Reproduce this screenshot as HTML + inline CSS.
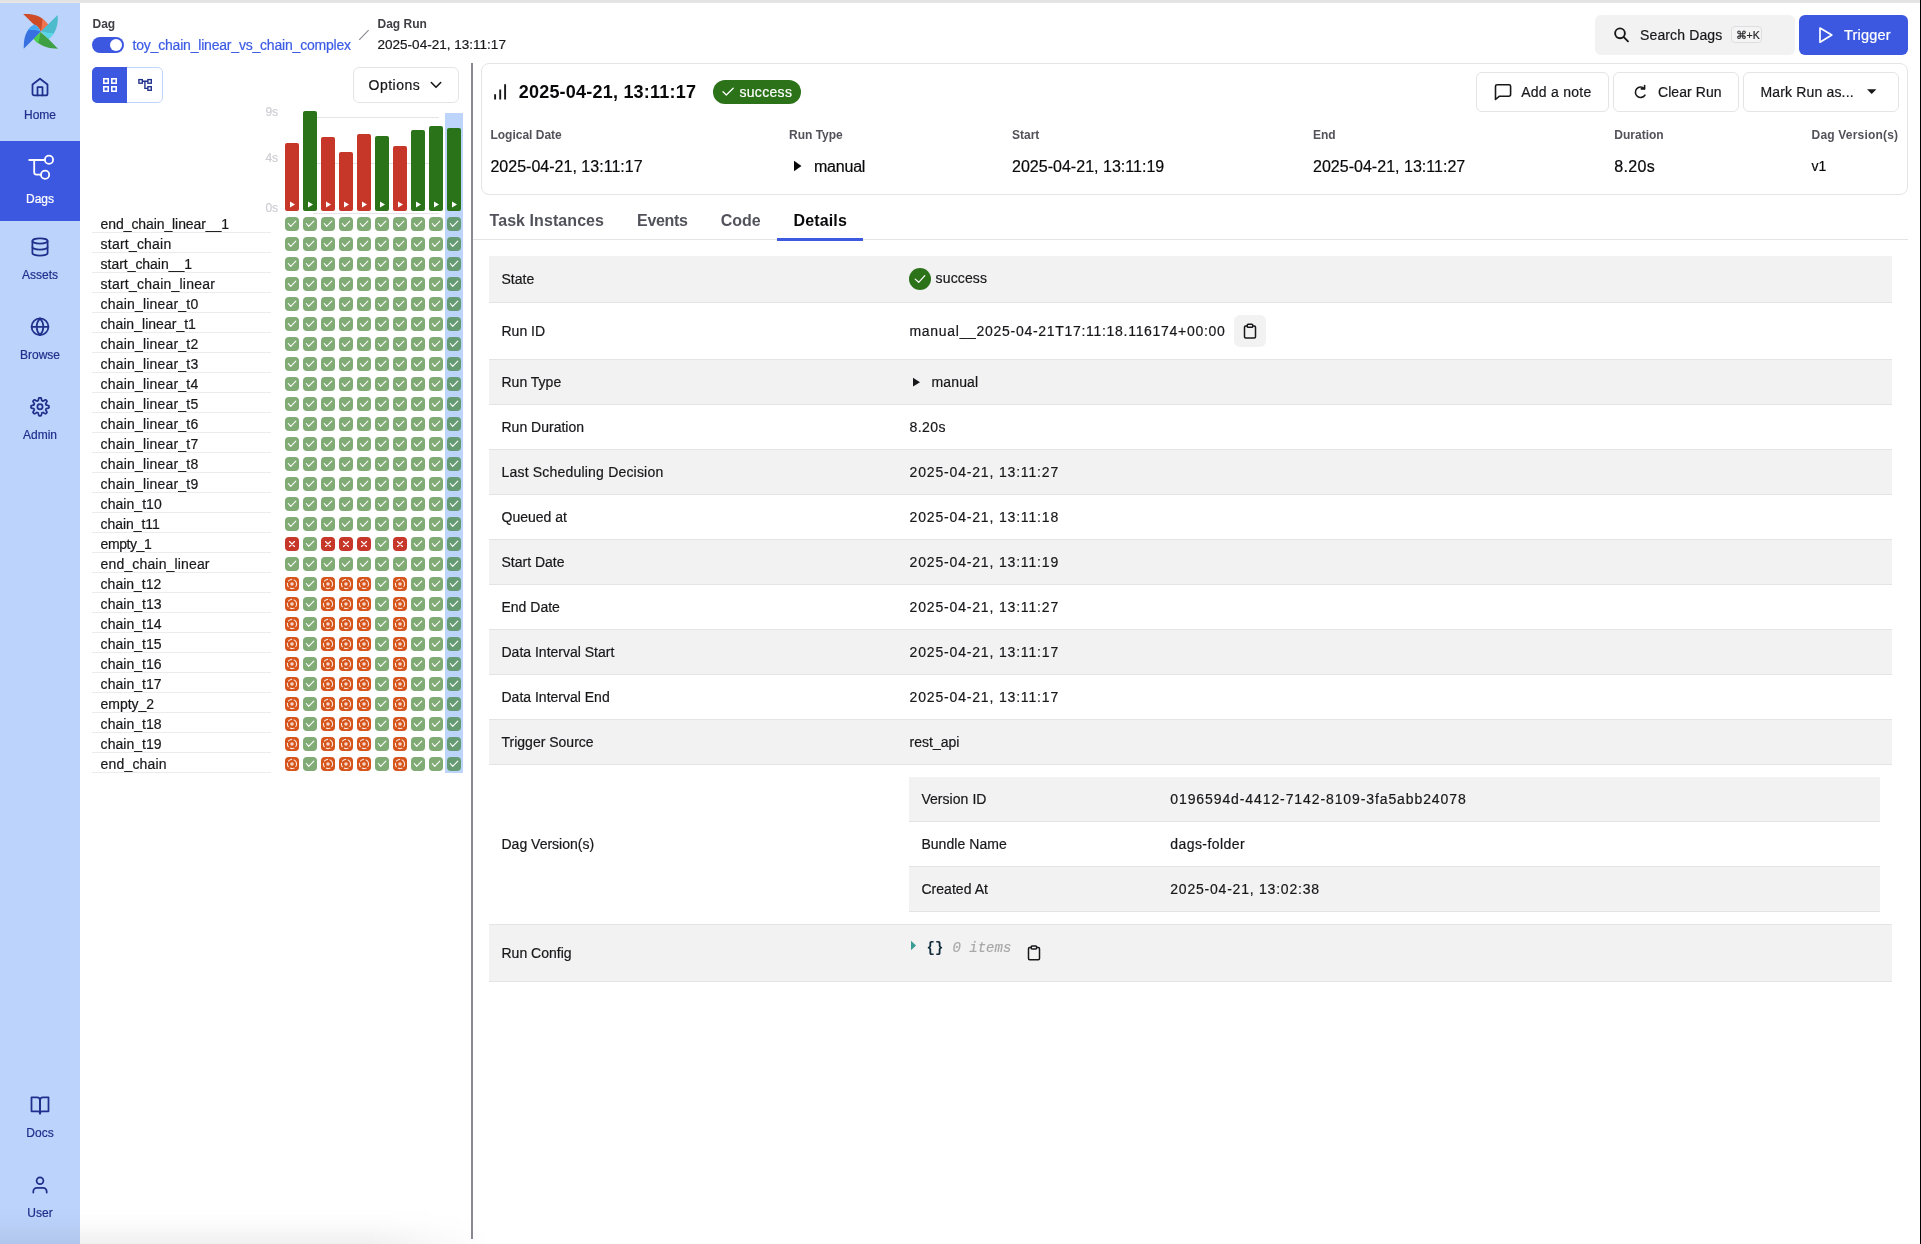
<!DOCTYPE html>
<html><head><meta charset="utf-8"><style>
*{box-sizing:border-box;margin:0;padding:0}
html,body{width:1921px;height:1244px;overflow:hidden;background:#fff;font-family:"Liberation Sans",sans-serif;color:#18181b}
.a{position:absolute}
.t{position:absolute;white-space:nowrap;line-height:1;-webkit-text-stroke:0.2px currentColor}
.b{-webkit-text-stroke:0}
svg{position:absolute;overflow:visible}
</style></head><body>
<div style="position:absolute;left:0;top:0;width:1921px;height:1244px;will-change:transform">
<div class="a" style="left:0px;top:0px;width:1920px;height:2px;background:#e3e3e3;"></div>
<div class="a" style="left:0px;top:2px;width:1920px;height:1px;background:rgba(0,0,0,0.09);"></div>
<div class="a" style="left:1920px;top:0px;width:1px;height:1244px;background:#000;"></div>
<div class="a" style="left:0px;top:3px;width:80px;height:1241px;background:#bcd3fb;"></div>
<div class="a" style="left:0px;top:141px;width:80px;height:80px;background:#3d58e0;"></div>
<div class="t" style="left:0;width:80px;text-align:center;top:108.74px;font-size:12px;color:#1f2f8c">Home</div>
<div class="t" style="left:0;width:80px;text-align:center;top:192.84px;font-size:12px;color:#fff">Dags</div>
<div class="t" style="left:0;width:80px;text-align:center;top:268.74px;font-size:12px;color:#1f2f8c">Assets</div>
<div class="t" style="left:0;width:80px;text-align:center;top:348.74px;font-size:12px;color:#1f2f8c">Browse</div>
<div class="t" style="left:0;width:80px;text-align:center;top:428.74px;font-size:12px;color:#1f2f8c">Admin</div>
<div class="t" style="left:0;width:80px;text-align:center;top:1126.74px;font-size:12px;color:#1f2f8c">Docs</div>
<div class="t" style="left:0;width:80px;text-align:center;top:1206.74px;font-size:12px;color:#1f2f8c">User</div>
<svg style="left:0;top:0" width="80" height="1244" viewBox="0 0 80 1244" fill="none" stroke-linecap="round" stroke-linejoin="round">
<g stroke="#1f2f8c" stroke-width="1.75">
 <!-- home -->
 <path d="M32.5 84.5 L40 78.7 L47.5 84.5 V93.7 a1.7 1.7 0 0 1 -1.7 1.7 H34.2 a1.7 1.7 0 0 1 -1.7 -1.7 Z"/>
 <path d="M37.5 95.4 V87.1 H42.5 V95.4"/>
 <!-- assets: database -->
 <ellipse cx="40" cy="241" rx="7.6" ry="2.6"/>
 <path d="M47.6 247 c0 1.45 -3.4 2.6 -7.6 2.6 s-7.6 -1.15 -7.6 -2.6"/>
 <path d="M32.4 241 v12 c0 1.45 3.4 2.6 7.6 2.6 s7.6 -1.15 7.6 -2.6 v-12"/>
 <!-- browse: globe -->
 <circle cx="40" cy="326.8" r="8.4"/>
 <line x1="31.6" y1="326.8" x2="48.4" y2="326.8"/>
 <path d="M40 318.4 a12.8 12.8 0 0 1 3.4 8.4 a12.8 12.8 0 0 1 -3.4 8.4 a12.8 12.8 0 0 1 -3.4 -8.4 a12.8 12.8 0 0 1 3.4 -8.4 z"/>
 <!-- admin gear -->
 <circle cx="40" cy="406.8" r="2.6"/>
 <path d="M40.00 397.80 L40.35 397.81 L40.71 397.83 L41.05 397.94 L41.31 398.56 L41.50 399.25 L41.65 399.94 L41.76 400.57 L41.98 400.71 L42.22 400.80 L42.45 400.89 L42.68 400.99 L42.91 401.10 L43.16 401.15 L43.69 400.78 L44.28 400.40 L44.90 400.05 L45.52 399.79 L45.85 399.96 L46.11 400.19 L46.36 400.44 L46.61 400.69 L46.84 400.95 L47.01 401.28 L46.75 401.90 L46.40 402.52 L46.02 403.11 L45.65 403.64 L45.70 403.89 L45.81 404.12 L45.91 404.35 L46.00 404.58 L46.09 404.82 L46.23 405.04 L46.86 405.15 L47.55 405.30 L48.24 405.49 L48.86 405.75 L48.97 406.09 L48.99 406.45 L49.00 406.80 L48.99 407.15 L48.97 407.51 L48.86 407.85 L48.24 408.11 L47.55 408.30 L46.86 408.45 L46.23 408.56 L46.09 408.78 L46.00 409.02 L45.91 409.25 L45.81 409.48 L45.70 409.71 L45.65 409.96 L46.02 410.49 L46.40 411.08 L46.75 411.70 L47.01 412.32 L46.84 412.65 L46.61 412.91 L46.36 413.16 L46.11 413.41 L45.85 413.64 L45.52 413.81 L44.90 413.55 L44.28 413.20 L43.69 412.82 L43.16 412.45 L42.91 412.50 L42.68 412.61 L42.45 412.71 L42.22 412.80 L41.98 412.89 L41.76 413.03 L41.65 413.66 L41.50 414.35 L41.31 415.04 L41.05 415.66 L40.71 415.77 L40.35 415.79 L40.00 415.80 L39.65 415.79 L39.29 415.77 L38.95 415.66 L38.69 415.04 L38.50 414.35 L38.35 413.66 L38.24 413.03 L38.02 412.89 L37.78 412.80 L37.55 412.71 L37.32 412.61 L37.09 412.50 L36.84 412.45 L36.31 412.82 L35.72 413.20 L35.10 413.55 L34.48 413.81 L34.15 413.64 L33.89 413.41 L33.64 413.16 L33.39 412.91 L33.16 412.65 L32.99 412.32 L33.25 411.70 L33.60 411.08 L33.98 410.49 L34.35 409.96 L34.30 409.71 L34.19 409.48 L34.09 409.25 L34.00 409.02 L33.91 408.78 L33.77 408.56 L33.14 408.45 L32.45 408.30 L31.76 408.11 L31.14 407.85 L31.03 407.51 L31.01 407.15 L31.00 406.80 L31.01 406.45 L31.03 406.09 L31.14 405.75 L31.76 405.49 L32.45 405.30 L33.14 405.15 L33.77 405.04 L33.91 404.82 L34.00 404.58 L34.09 404.35 L34.19 404.12 L34.30 403.89 L34.35 403.64 L33.98 403.11 L33.60 402.52 L33.25 401.90 L32.99 401.28 L33.16 400.95 L33.39 400.69 L33.64 400.44 L33.89 400.19 L34.15 399.96 L34.48 399.79 L35.10 400.05 L35.72 400.40 L36.31 400.78 L36.84 401.15 L37.09 401.10 L37.32 400.99 L37.55 400.89 L37.78 400.80 L38.02 400.71 L38.24 400.57 L38.35 399.94 L38.50 399.25 L38.69 398.56 L38.95 397.94 L39.29 397.83 L39.65 397.81 L40.00 397.80 Z"/>
 <!-- docs: book -->
 <path d="M31.5 1097.3 H37 a3 3 0 0 1 3 3 V1113.5 a2.2 2.2 0 0 0 -2.2 -2.2 H31.5 Z"/>
 <path d="M48.5 1097.3 H43 a3 3 0 0 0 -3 3 V1113.5 a2.2 2.2 0 0 1 2.2 -2.2 H48.5 Z"/>
 <!-- user -->
 <circle cx="40" cy="1180.8" r="3.4"/>
 <path d="M33.3 1192.6 v-1.2 a3.6 3.6 0 0 1 3.6 -3.6 h6.2 a3.6 3.6 0 0 1 3.6 3.6 v1.2"/>
</g>
<g stroke="#fff" stroke-width="1.8">
 <path d="M29.2 160 H44.9"/>
 <circle cx="49" cy="159.8" r="4.1"/>
 <path d="M34.2 160 V172.3 a2.4 2.4 0 0 0 2.4 2.4 H40.9"/>
 <circle cx="45.1" cy="174.8" r="4.1"/>
</g>
</svg>
<svg style="left:20px;top:10px" width="42" height="42" viewBox="0 0 1244 1244">
<path fill="#cf4a26" d="M95 120 C330 110 560 150 700 290 L830 430 L615 640 C560 520 500 440 410 430 Z"/>
<path fill="#ee7452" d="M660 250 C740 320 800 380 830 430 L615 640 C640 520 660 380 660 250 Z"/>
<path fill="#4cbccd" d="M1115 145 C1130 400 1100 650 850 850 L625 640 L830 430 Z"/>
<path fill="#59d7e9" d="M625 640 C700 640 800 690 1000 690 C950 760 900 810 850 850 C760 760 700 700 625 640 Z"/>
<path fill="#3fa043" d="M1125 1145 C870 1140 620 1100 400 850 L610 650 L850 870 Z"/>
<path fill="#4fd053" d="M610 650 C600 750 560 900 540 990 C480 950 440 900 400 850 Z"/>
<path fill="#3670e1" d="M110 1150 C110 850 150 600 420 440 L610 640 L400 860 Z"/>
<path fill="#46a8f6" d="M420 440 C470 440 560 520 610 640 C500 590 380 580 230 600 C290 520 350 470 420 440 Z"/>
</svg>
<div class="t" style="left:92.50px;top:17.74px;font-size:12px;font-weight:700;-webkit-text-stroke:0;color:#3f3f46;">Dag</div>
<div class="a" style="left:92px;top:37px;width:32px;height:16px;background:#3d58e0;border-radius:8px"></div>
<div class="a" style="left:110px;top:39px;width:12px;height:12px;background:#fff;border-radius:6px"></div>
<div class="t" style="left:132.50px;top:38.15px;font-size:14px;color:#3b5be4;letter-spacing:-0.198px">toy_chain_linear_vs_chain_complex</div>
<svg style="left:0;top:0" width="1" height="1"><line x1="359.2" y1="39.8" x2="368.6" y2="30.1" stroke="#85858e" stroke-width="1.05"/></svg>
<div class="t" style="left:377.50px;top:17.64px;font-size:12px;font-weight:700;-webkit-text-stroke:0;color:#3f3f46;">Dag Run</div>
<div class="t" style="left:377.50px;top:38.37px;font-size:13.5px;color:#18181b;letter-spacing:0.015px">2025-04-21, 13:11:17</div>
<div class="a" style="left:92px;top:67px;width:71px;height:36px;background:#fff;border:1px solid #c0d5fb;border-radius:5px"></div>
<div class="a" style="left:92px;top:67px;width:35px;height:36px;background:#3d58e0;border-radius:5px 0 0 5px"></div>
<svg style="left:0;top:0" width="1" height="1" fill="none" stroke-width="1.6">
<g stroke="#fff"><rect x="103.8" y="78.8" width="4.4" height="4.4"/><rect x="111.8" y="78.8" width="4.4" height="4.4"/><rect x="103.8" y="86.8" width="4.4" height="4.4"/><rect x="111.8" y="86.8" width="4.4" height="4.4"/></g>
<g stroke="#1f2f8c" stroke-width="1.35"><rect x="138.9" y="79.6" width="3.4" height="3.6"/><rect x="147.9" y="79.6" width="3.4" height="3.6"/><rect x="147.9" y="86.7" width="3.4" height="3.6"/><path d="M142.3 81.2 H147.9 M144.9 81.2 V88.4 H147.9"/></g>
</svg>
<div class="a" style="left:353px;top:67px;width:106px;height:36px;background:#fff;border:1px solid #e4e4e7;border-radius:6px"></div>
<div class="t" style="left:368.60px;top:78.25px;font-size:14px;color:#18181b;letter-spacing:0.475px">Options</div>
<svg style="left:0;top:0" width="1" height="1" fill="none"><path d="M431.3 82.5 L436 87.3 L440.7 82.5" stroke="#18181b" stroke-width="1.6" stroke-linecap="round" stroke-linejoin="round"/></svg>
<div class="a" style="left:471px;top:63px;width:2px;height:1176px;background:#8a8a93;"></div>
<div class="t" style="left:265.40px;top:105.74px;font-size:12px;color:#cdcdd3;">9s</div>
<div class="t" style="left:265.40px;top:151.64px;font-size:12px;color:#cdcdd3;">4s</div>
<div class="t" style="left:265.40px;top:201.84px;font-size:12px;color:#cdcdd3;">0s</div>
<div class="a" style="left:313px;top:117px;width:126px;height:1px;background:#e4e4e7;"></div>
<div class="a" style="left:313px;top:163px;width:126px;height:1px;background:#e4e4e7;"></div>
<div class="a" style="left:313px;top:213px;width:126px;height:1px;background:#e4e4e7;"></div>
<div class="a" style="left:445px;top:113px;width:18px;height:660px;background:#bdd5fb;"></div>
<div class="a" style="left:285px;top:143px;width:14px;height:68px;background:#c6372a;border-radius:2px"></div>
<div class="a" style="left:303px;top:111px;width:14px;height:100px;background:#2b7319;border-radius:2px"></div>
<div class="a" style="left:321px;top:137px;width:14px;height:74px;background:#c6372a;border-radius:2px"></div>
<div class="a" style="left:339px;top:152px;width:14px;height:59px;background:#c6372a;border-radius:2px"></div>
<div class="a" style="left:357px;top:134px;width:14px;height:77px;background:#c6372a;border-radius:2px"></div>
<div class="a" style="left:375px;top:136px;width:14px;height:75px;background:#2b7319;border-radius:2px"></div>
<div class="a" style="left:393px;top:146px;width:14px;height:65px;background:#c6372a;border-radius:2px"></div>
<div class="a" style="left:411px;top:130px;width:14px;height:81px;background:#2b7319;border-radius:2px"></div>
<div class="a" style="left:429px;top:126px;width:14px;height:85px;background:#2b7319;border-radius:2px"></div>
<div class="a" style="left:447px;top:128px;width:14px;height:83px;background:#2b7319;border-radius:2px"></div>
<svg style="left:0;top:0" width="1" height="1"><path d="M290 201.5 L295 204.5 L290 207.5 Z" fill="#fff"/><path d="M308 201.5 L313 204.5 L308 207.5 Z" fill="#fff"/><path d="M326 201.5 L331 204.5 L326 207.5 Z" fill="#fff"/><path d="M344 201.5 L349 204.5 L344 207.5 Z" fill="#fff"/><path d="M362 201.5 L367 204.5 L362 207.5 Z" fill="#fff"/><path d="M380 201.5 L385 204.5 L380 207.5 Z" fill="#fff"/><path d="M398 201.5 L403 204.5 L398 207.5 Z" fill="#fff"/><path d="M416 201.5 L421 204.5 L416 207.5 Z" fill="#fff"/><path d="M434 201.5 L439 204.5 L434 207.5 Z" fill="#fff"/><path d="M452 201.5 L457 204.5 L452 207.5 Z" fill="#fff"/></svg>
<div class="t" style="left:100.60px;top:217.05px;font-size:14px;color:#18181b;letter-spacing:-0.089px">end_chain_linear__1</div>
<div class="a" style="left:92px;top:232px;width:179px;height:1px;background:#ececee;"></div>
<div class="a" style="left:285px;top:217px;width:14px;height:14px;background:rgba(43,115,25,0.6);border-radius:4px"></div>
<div class="a" style="left:303px;top:217px;width:14px;height:14px;background:rgba(43,115,25,0.6);border-radius:4px"></div>
<div class="a" style="left:321px;top:217px;width:14px;height:14px;background:rgba(43,115,25,0.6);border-radius:4px"></div>
<div class="a" style="left:339px;top:217px;width:14px;height:14px;background:rgba(43,115,25,0.6);border-radius:4px"></div>
<div class="a" style="left:357px;top:217px;width:14px;height:14px;background:rgba(43,115,25,0.6);border-radius:4px"></div>
<div class="a" style="left:375px;top:217px;width:14px;height:14px;background:rgba(43,115,25,0.6);border-radius:4px"></div>
<div class="a" style="left:393px;top:217px;width:14px;height:14px;background:rgba(43,115,25,0.6);border-radius:4px"></div>
<div class="a" style="left:411px;top:217px;width:14px;height:14px;background:rgba(43,115,25,0.6);border-radius:4px"></div>
<div class="a" style="left:429px;top:217px;width:14px;height:14px;background:rgba(43,115,25,0.6);border-radius:4px"></div>
<div class="a" style="left:447px;top:217px;width:14px;height:14px;background:rgba(43,115,25,0.6);border-radius:4px"></div>
<div class="t" style="left:100.60px;top:237.05px;font-size:14px;color:#18181b;letter-spacing:0.212px">start_chain</div>
<div class="a" style="left:92px;top:252px;width:179px;height:1px;background:#ececee;"></div>
<div class="a" style="left:285px;top:237px;width:14px;height:14px;background:rgba(43,115,25,0.6);border-radius:4px"></div>
<div class="a" style="left:303px;top:237px;width:14px;height:14px;background:rgba(43,115,25,0.6);border-radius:4px"></div>
<div class="a" style="left:321px;top:237px;width:14px;height:14px;background:rgba(43,115,25,0.6);border-radius:4px"></div>
<div class="a" style="left:339px;top:237px;width:14px;height:14px;background:rgba(43,115,25,0.6);border-radius:4px"></div>
<div class="a" style="left:357px;top:237px;width:14px;height:14px;background:rgba(43,115,25,0.6);border-radius:4px"></div>
<div class="a" style="left:375px;top:237px;width:14px;height:14px;background:rgba(43,115,25,0.6);border-radius:4px"></div>
<div class="a" style="left:393px;top:237px;width:14px;height:14px;background:rgba(43,115,25,0.6);border-radius:4px"></div>
<div class="a" style="left:411px;top:237px;width:14px;height:14px;background:rgba(43,115,25,0.6);border-radius:4px"></div>
<div class="a" style="left:429px;top:237px;width:14px;height:14px;background:rgba(43,115,25,0.6);border-radius:4px"></div>
<div class="a" style="left:447px;top:237px;width:14px;height:14px;background:rgba(43,115,25,0.6);border-radius:4px"></div>
<div class="t" style="left:100.60px;top:257.05px;font-size:14px;color:#18181b;letter-spacing:-0.034px">start_chain__1</div>
<div class="a" style="left:92px;top:272px;width:179px;height:1px;background:#ececee;"></div>
<div class="a" style="left:285px;top:257px;width:14px;height:14px;background:rgba(43,115,25,0.6);border-radius:4px"></div>
<div class="a" style="left:303px;top:257px;width:14px;height:14px;background:rgba(43,115,25,0.6);border-radius:4px"></div>
<div class="a" style="left:321px;top:257px;width:14px;height:14px;background:rgba(43,115,25,0.6);border-radius:4px"></div>
<div class="a" style="left:339px;top:257px;width:14px;height:14px;background:rgba(43,115,25,0.6);border-radius:4px"></div>
<div class="a" style="left:357px;top:257px;width:14px;height:14px;background:rgba(43,115,25,0.6);border-radius:4px"></div>
<div class="a" style="left:375px;top:257px;width:14px;height:14px;background:rgba(43,115,25,0.6);border-radius:4px"></div>
<div class="a" style="left:393px;top:257px;width:14px;height:14px;background:rgba(43,115,25,0.6);border-radius:4px"></div>
<div class="a" style="left:411px;top:257px;width:14px;height:14px;background:rgba(43,115,25,0.6);border-radius:4px"></div>
<div class="a" style="left:429px;top:257px;width:14px;height:14px;background:rgba(43,115,25,0.6);border-radius:4px"></div>
<div class="a" style="left:447px;top:257px;width:14px;height:14px;background:rgba(43,115,25,0.6);border-radius:4px"></div>
<div class="t" style="left:100.60px;top:277.05px;font-size:14px;color:#18181b;letter-spacing:0.223px">start_chain_linear</div>
<div class="a" style="left:92px;top:292px;width:179px;height:1px;background:#ececee;"></div>
<div class="a" style="left:285px;top:277px;width:14px;height:14px;background:rgba(43,115,25,0.6);border-radius:4px"></div>
<div class="a" style="left:303px;top:277px;width:14px;height:14px;background:rgba(43,115,25,0.6);border-radius:4px"></div>
<div class="a" style="left:321px;top:277px;width:14px;height:14px;background:rgba(43,115,25,0.6);border-radius:4px"></div>
<div class="a" style="left:339px;top:277px;width:14px;height:14px;background:rgba(43,115,25,0.6);border-radius:4px"></div>
<div class="a" style="left:357px;top:277px;width:14px;height:14px;background:rgba(43,115,25,0.6);border-radius:4px"></div>
<div class="a" style="left:375px;top:277px;width:14px;height:14px;background:rgba(43,115,25,0.6);border-radius:4px"></div>
<div class="a" style="left:393px;top:277px;width:14px;height:14px;background:rgba(43,115,25,0.6);border-radius:4px"></div>
<div class="a" style="left:411px;top:277px;width:14px;height:14px;background:rgba(43,115,25,0.6);border-radius:4px"></div>
<div class="a" style="left:429px;top:277px;width:14px;height:14px;background:rgba(43,115,25,0.6);border-radius:4px"></div>
<div class="a" style="left:447px;top:277px;width:14px;height:14px;background:rgba(43,115,25,0.6);border-radius:4px"></div>
<div class="t" style="left:100.60px;top:297.05px;font-size:14px;color:#18181b;letter-spacing:0.188px">chain_linear_t0</div>
<div class="a" style="left:92px;top:312px;width:179px;height:1px;background:#ececee;"></div>
<div class="a" style="left:285px;top:297px;width:14px;height:14px;background:rgba(43,115,25,0.6);border-radius:4px"></div>
<div class="a" style="left:303px;top:297px;width:14px;height:14px;background:rgba(43,115,25,0.6);border-radius:4px"></div>
<div class="a" style="left:321px;top:297px;width:14px;height:14px;background:rgba(43,115,25,0.6);border-radius:4px"></div>
<div class="a" style="left:339px;top:297px;width:14px;height:14px;background:rgba(43,115,25,0.6);border-radius:4px"></div>
<div class="a" style="left:357px;top:297px;width:14px;height:14px;background:rgba(43,115,25,0.6);border-radius:4px"></div>
<div class="a" style="left:375px;top:297px;width:14px;height:14px;background:rgba(43,115,25,0.6);border-radius:4px"></div>
<div class="a" style="left:393px;top:297px;width:14px;height:14px;background:rgba(43,115,25,0.6);border-radius:4px"></div>
<div class="a" style="left:411px;top:297px;width:14px;height:14px;background:rgba(43,115,25,0.6);border-radius:4px"></div>
<div class="a" style="left:429px;top:297px;width:14px;height:14px;background:rgba(43,115,25,0.6);border-radius:4px"></div>
<div class="a" style="left:447px;top:297px;width:14px;height:14px;background:rgba(43,115,25,0.6);border-radius:4px"></div>
<div class="t" style="left:100.60px;top:317.05px;font-size:14px;color:#18181b;letter-spacing:0.024px">chain_linear_t1</div>
<div class="a" style="left:92px;top:332px;width:179px;height:1px;background:#ececee;"></div>
<div class="a" style="left:285px;top:317px;width:14px;height:14px;background:rgba(43,115,25,0.6);border-radius:4px"></div>
<div class="a" style="left:303px;top:317px;width:14px;height:14px;background:rgba(43,115,25,0.6);border-radius:4px"></div>
<div class="a" style="left:321px;top:317px;width:14px;height:14px;background:rgba(43,115,25,0.6);border-radius:4px"></div>
<div class="a" style="left:339px;top:317px;width:14px;height:14px;background:rgba(43,115,25,0.6);border-radius:4px"></div>
<div class="a" style="left:357px;top:317px;width:14px;height:14px;background:rgba(43,115,25,0.6);border-radius:4px"></div>
<div class="a" style="left:375px;top:317px;width:14px;height:14px;background:rgba(43,115,25,0.6);border-radius:4px"></div>
<div class="a" style="left:393px;top:317px;width:14px;height:14px;background:rgba(43,115,25,0.6);border-radius:4px"></div>
<div class="a" style="left:411px;top:317px;width:14px;height:14px;background:rgba(43,115,25,0.6);border-radius:4px"></div>
<div class="a" style="left:429px;top:317px;width:14px;height:14px;background:rgba(43,115,25,0.6);border-radius:4px"></div>
<div class="a" style="left:447px;top:317px;width:14px;height:14px;background:rgba(43,115,25,0.6);border-radius:4px"></div>
<div class="t" style="left:100.60px;top:337.05px;font-size:14px;color:#18181b;letter-spacing:0.188px">chain_linear_t2</div>
<div class="a" style="left:92px;top:352px;width:179px;height:1px;background:#ececee;"></div>
<div class="a" style="left:285px;top:337px;width:14px;height:14px;background:rgba(43,115,25,0.6);border-radius:4px"></div>
<div class="a" style="left:303px;top:337px;width:14px;height:14px;background:rgba(43,115,25,0.6);border-radius:4px"></div>
<div class="a" style="left:321px;top:337px;width:14px;height:14px;background:rgba(43,115,25,0.6);border-radius:4px"></div>
<div class="a" style="left:339px;top:337px;width:14px;height:14px;background:rgba(43,115,25,0.6);border-radius:4px"></div>
<div class="a" style="left:357px;top:337px;width:14px;height:14px;background:rgba(43,115,25,0.6);border-radius:4px"></div>
<div class="a" style="left:375px;top:337px;width:14px;height:14px;background:rgba(43,115,25,0.6);border-radius:4px"></div>
<div class="a" style="left:393px;top:337px;width:14px;height:14px;background:rgba(43,115,25,0.6);border-radius:4px"></div>
<div class="a" style="left:411px;top:337px;width:14px;height:14px;background:rgba(43,115,25,0.6);border-radius:4px"></div>
<div class="a" style="left:429px;top:337px;width:14px;height:14px;background:rgba(43,115,25,0.6);border-radius:4px"></div>
<div class="a" style="left:447px;top:337px;width:14px;height:14px;background:rgba(43,115,25,0.6);border-radius:4px"></div>
<div class="t" style="left:100.60px;top:357.05px;font-size:14px;color:#18181b;letter-spacing:0.188px">chain_linear_t3</div>
<div class="a" style="left:92px;top:372px;width:179px;height:1px;background:#ececee;"></div>
<div class="a" style="left:285px;top:357px;width:14px;height:14px;background:rgba(43,115,25,0.6);border-radius:4px"></div>
<div class="a" style="left:303px;top:357px;width:14px;height:14px;background:rgba(43,115,25,0.6);border-radius:4px"></div>
<div class="a" style="left:321px;top:357px;width:14px;height:14px;background:rgba(43,115,25,0.6);border-radius:4px"></div>
<div class="a" style="left:339px;top:357px;width:14px;height:14px;background:rgba(43,115,25,0.6);border-radius:4px"></div>
<div class="a" style="left:357px;top:357px;width:14px;height:14px;background:rgba(43,115,25,0.6);border-radius:4px"></div>
<div class="a" style="left:375px;top:357px;width:14px;height:14px;background:rgba(43,115,25,0.6);border-radius:4px"></div>
<div class="a" style="left:393px;top:357px;width:14px;height:14px;background:rgba(43,115,25,0.6);border-radius:4px"></div>
<div class="a" style="left:411px;top:357px;width:14px;height:14px;background:rgba(43,115,25,0.6);border-radius:4px"></div>
<div class="a" style="left:429px;top:357px;width:14px;height:14px;background:rgba(43,115,25,0.6);border-radius:4px"></div>
<div class="a" style="left:447px;top:357px;width:14px;height:14px;background:rgba(43,115,25,0.6);border-radius:4px"></div>
<div class="t" style="left:100.60px;top:377.05px;font-size:14px;color:#18181b;letter-spacing:0.188px">chain_linear_t4</div>
<div class="a" style="left:92px;top:392px;width:179px;height:1px;background:#ececee;"></div>
<div class="a" style="left:285px;top:377px;width:14px;height:14px;background:rgba(43,115,25,0.6);border-radius:4px"></div>
<div class="a" style="left:303px;top:377px;width:14px;height:14px;background:rgba(43,115,25,0.6);border-radius:4px"></div>
<div class="a" style="left:321px;top:377px;width:14px;height:14px;background:rgba(43,115,25,0.6);border-radius:4px"></div>
<div class="a" style="left:339px;top:377px;width:14px;height:14px;background:rgba(43,115,25,0.6);border-radius:4px"></div>
<div class="a" style="left:357px;top:377px;width:14px;height:14px;background:rgba(43,115,25,0.6);border-radius:4px"></div>
<div class="a" style="left:375px;top:377px;width:14px;height:14px;background:rgba(43,115,25,0.6);border-radius:4px"></div>
<div class="a" style="left:393px;top:377px;width:14px;height:14px;background:rgba(43,115,25,0.6);border-radius:4px"></div>
<div class="a" style="left:411px;top:377px;width:14px;height:14px;background:rgba(43,115,25,0.6);border-radius:4px"></div>
<div class="a" style="left:429px;top:377px;width:14px;height:14px;background:rgba(43,115,25,0.6);border-radius:4px"></div>
<div class="a" style="left:447px;top:377px;width:14px;height:14px;background:rgba(43,115,25,0.6);border-radius:4px"></div>
<div class="t" style="left:100.60px;top:397.05px;font-size:14px;color:#18181b;letter-spacing:0.188px">chain_linear_t5</div>
<div class="a" style="left:92px;top:412px;width:179px;height:1px;background:#ececee;"></div>
<div class="a" style="left:285px;top:397px;width:14px;height:14px;background:rgba(43,115,25,0.6);border-radius:4px"></div>
<div class="a" style="left:303px;top:397px;width:14px;height:14px;background:rgba(43,115,25,0.6);border-radius:4px"></div>
<div class="a" style="left:321px;top:397px;width:14px;height:14px;background:rgba(43,115,25,0.6);border-radius:4px"></div>
<div class="a" style="left:339px;top:397px;width:14px;height:14px;background:rgba(43,115,25,0.6);border-radius:4px"></div>
<div class="a" style="left:357px;top:397px;width:14px;height:14px;background:rgba(43,115,25,0.6);border-radius:4px"></div>
<div class="a" style="left:375px;top:397px;width:14px;height:14px;background:rgba(43,115,25,0.6);border-radius:4px"></div>
<div class="a" style="left:393px;top:397px;width:14px;height:14px;background:rgba(43,115,25,0.6);border-radius:4px"></div>
<div class="a" style="left:411px;top:397px;width:14px;height:14px;background:rgba(43,115,25,0.6);border-radius:4px"></div>
<div class="a" style="left:429px;top:397px;width:14px;height:14px;background:rgba(43,115,25,0.6);border-radius:4px"></div>
<div class="a" style="left:447px;top:397px;width:14px;height:14px;background:rgba(43,115,25,0.6);border-radius:4px"></div>
<div class="t" style="left:100.60px;top:417.05px;font-size:14px;color:#18181b;letter-spacing:0.188px">chain_linear_t6</div>
<div class="a" style="left:92px;top:432px;width:179px;height:1px;background:#ececee;"></div>
<div class="a" style="left:285px;top:417px;width:14px;height:14px;background:rgba(43,115,25,0.6);border-radius:4px"></div>
<div class="a" style="left:303px;top:417px;width:14px;height:14px;background:rgba(43,115,25,0.6);border-radius:4px"></div>
<div class="a" style="left:321px;top:417px;width:14px;height:14px;background:rgba(43,115,25,0.6);border-radius:4px"></div>
<div class="a" style="left:339px;top:417px;width:14px;height:14px;background:rgba(43,115,25,0.6);border-radius:4px"></div>
<div class="a" style="left:357px;top:417px;width:14px;height:14px;background:rgba(43,115,25,0.6);border-radius:4px"></div>
<div class="a" style="left:375px;top:417px;width:14px;height:14px;background:rgba(43,115,25,0.6);border-radius:4px"></div>
<div class="a" style="left:393px;top:417px;width:14px;height:14px;background:rgba(43,115,25,0.6);border-radius:4px"></div>
<div class="a" style="left:411px;top:417px;width:14px;height:14px;background:rgba(43,115,25,0.6);border-radius:4px"></div>
<div class="a" style="left:429px;top:417px;width:14px;height:14px;background:rgba(43,115,25,0.6);border-radius:4px"></div>
<div class="a" style="left:447px;top:417px;width:14px;height:14px;background:rgba(43,115,25,0.6);border-radius:4px"></div>
<div class="t" style="left:100.60px;top:437.05px;font-size:14px;color:#18181b;letter-spacing:0.188px">chain_linear_t7</div>
<div class="a" style="left:92px;top:452px;width:179px;height:1px;background:#ececee;"></div>
<div class="a" style="left:285px;top:437px;width:14px;height:14px;background:rgba(43,115,25,0.6);border-radius:4px"></div>
<div class="a" style="left:303px;top:437px;width:14px;height:14px;background:rgba(43,115,25,0.6);border-radius:4px"></div>
<div class="a" style="left:321px;top:437px;width:14px;height:14px;background:rgba(43,115,25,0.6);border-radius:4px"></div>
<div class="a" style="left:339px;top:437px;width:14px;height:14px;background:rgba(43,115,25,0.6);border-radius:4px"></div>
<div class="a" style="left:357px;top:437px;width:14px;height:14px;background:rgba(43,115,25,0.6);border-radius:4px"></div>
<div class="a" style="left:375px;top:437px;width:14px;height:14px;background:rgba(43,115,25,0.6);border-radius:4px"></div>
<div class="a" style="left:393px;top:437px;width:14px;height:14px;background:rgba(43,115,25,0.6);border-radius:4px"></div>
<div class="a" style="left:411px;top:437px;width:14px;height:14px;background:rgba(43,115,25,0.6);border-radius:4px"></div>
<div class="a" style="left:429px;top:437px;width:14px;height:14px;background:rgba(43,115,25,0.6);border-radius:4px"></div>
<div class="a" style="left:447px;top:437px;width:14px;height:14px;background:rgba(43,115,25,0.6);border-radius:4px"></div>
<div class="t" style="left:100.60px;top:457.05px;font-size:14px;color:#18181b;letter-spacing:0.188px">chain_linear_t8</div>
<div class="a" style="left:92px;top:472px;width:179px;height:1px;background:#ececee;"></div>
<div class="a" style="left:285px;top:457px;width:14px;height:14px;background:rgba(43,115,25,0.6);border-radius:4px"></div>
<div class="a" style="left:303px;top:457px;width:14px;height:14px;background:rgba(43,115,25,0.6);border-radius:4px"></div>
<div class="a" style="left:321px;top:457px;width:14px;height:14px;background:rgba(43,115,25,0.6);border-radius:4px"></div>
<div class="a" style="left:339px;top:457px;width:14px;height:14px;background:rgba(43,115,25,0.6);border-radius:4px"></div>
<div class="a" style="left:357px;top:457px;width:14px;height:14px;background:rgba(43,115,25,0.6);border-radius:4px"></div>
<div class="a" style="left:375px;top:457px;width:14px;height:14px;background:rgba(43,115,25,0.6);border-radius:4px"></div>
<div class="a" style="left:393px;top:457px;width:14px;height:14px;background:rgba(43,115,25,0.6);border-radius:4px"></div>
<div class="a" style="left:411px;top:457px;width:14px;height:14px;background:rgba(43,115,25,0.6);border-radius:4px"></div>
<div class="a" style="left:429px;top:457px;width:14px;height:14px;background:rgba(43,115,25,0.6);border-radius:4px"></div>
<div class="a" style="left:447px;top:457px;width:14px;height:14px;background:rgba(43,115,25,0.6);border-radius:4px"></div>
<div class="t" style="left:100.60px;top:477.05px;font-size:14px;color:#18181b;letter-spacing:0.188px">chain_linear_t9</div>
<div class="a" style="left:92px;top:492px;width:179px;height:1px;background:#ececee;"></div>
<div class="a" style="left:285px;top:477px;width:14px;height:14px;background:rgba(43,115,25,0.6);border-radius:4px"></div>
<div class="a" style="left:303px;top:477px;width:14px;height:14px;background:rgba(43,115,25,0.6);border-radius:4px"></div>
<div class="a" style="left:321px;top:477px;width:14px;height:14px;background:rgba(43,115,25,0.6);border-radius:4px"></div>
<div class="a" style="left:339px;top:477px;width:14px;height:14px;background:rgba(43,115,25,0.6);border-radius:4px"></div>
<div class="a" style="left:357px;top:477px;width:14px;height:14px;background:rgba(43,115,25,0.6);border-radius:4px"></div>
<div class="a" style="left:375px;top:477px;width:14px;height:14px;background:rgba(43,115,25,0.6);border-radius:4px"></div>
<div class="a" style="left:393px;top:477px;width:14px;height:14px;background:rgba(43,115,25,0.6);border-radius:4px"></div>
<div class="a" style="left:411px;top:477px;width:14px;height:14px;background:rgba(43,115,25,0.6);border-radius:4px"></div>
<div class="a" style="left:429px;top:477px;width:14px;height:14px;background:rgba(43,115,25,0.6);border-radius:4px"></div>
<div class="a" style="left:447px;top:477px;width:14px;height:14px;background:rgba(43,115,25,0.6);border-radius:4px"></div>
<div class="t" style="left:100.60px;top:497.05px;font-size:14px;color:#18181b;letter-spacing:0.048px">chain_t10</div>
<div class="a" style="left:92px;top:512px;width:179px;height:1px;background:#ececee;"></div>
<div class="a" style="left:285px;top:497px;width:14px;height:14px;background:rgba(43,115,25,0.6);border-radius:4px"></div>
<div class="a" style="left:303px;top:497px;width:14px;height:14px;background:rgba(43,115,25,0.6);border-radius:4px"></div>
<div class="a" style="left:321px;top:497px;width:14px;height:14px;background:rgba(43,115,25,0.6);border-radius:4px"></div>
<div class="a" style="left:339px;top:497px;width:14px;height:14px;background:rgba(43,115,25,0.6);border-radius:4px"></div>
<div class="a" style="left:357px;top:497px;width:14px;height:14px;background:rgba(43,115,25,0.6);border-radius:4px"></div>
<div class="a" style="left:375px;top:497px;width:14px;height:14px;background:rgba(43,115,25,0.6);border-radius:4px"></div>
<div class="a" style="left:393px;top:497px;width:14px;height:14px;background:rgba(43,115,25,0.6);border-radius:4px"></div>
<div class="a" style="left:411px;top:497px;width:14px;height:14px;background:rgba(43,115,25,0.6);border-radius:4px"></div>
<div class="a" style="left:429px;top:497px;width:14px;height:14px;background:rgba(43,115,25,0.6);border-radius:4px"></div>
<div class="a" style="left:447px;top:497px;width:14px;height:14px;background:rgba(43,115,25,0.6);border-radius:4px"></div>
<div class="t" style="left:100.60px;top:517.05px;font-size:14px;color:#18181b;letter-spacing:-0.073px">chain_t11</div>
<div class="a" style="left:92px;top:532px;width:179px;height:1px;background:#ececee;"></div>
<div class="a" style="left:285px;top:517px;width:14px;height:14px;background:rgba(43,115,25,0.6);border-radius:4px"></div>
<div class="a" style="left:303px;top:517px;width:14px;height:14px;background:rgba(43,115,25,0.6);border-radius:4px"></div>
<div class="a" style="left:321px;top:517px;width:14px;height:14px;background:rgba(43,115,25,0.6);border-radius:4px"></div>
<div class="a" style="left:339px;top:517px;width:14px;height:14px;background:rgba(43,115,25,0.6);border-radius:4px"></div>
<div class="a" style="left:357px;top:517px;width:14px;height:14px;background:rgba(43,115,25,0.6);border-radius:4px"></div>
<div class="a" style="left:375px;top:517px;width:14px;height:14px;background:rgba(43,115,25,0.6);border-radius:4px"></div>
<div class="a" style="left:393px;top:517px;width:14px;height:14px;background:rgba(43,115,25,0.6);border-radius:4px"></div>
<div class="a" style="left:411px;top:517px;width:14px;height:14px;background:rgba(43,115,25,0.6);border-radius:4px"></div>
<div class="a" style="left:429px;top:517px;width:14px;height:14px;background:rgba(43,115,25,0.6);border-radius:4px"></div>
<div class="a" style="left:447px;top:517px;width:14px;height:14px;background:rgba(43,115,25,0.6);border-radius:4px"></div>
<div class="t" style="left:100.60px;top:537.05px;font-size:14px;color:#18181b;letter-spacing:-0.434px">empty_1</div>
<div class="a" style="left:92px;top:552px;width:179px;height:1px;background:#ececee;"></div>
<div class="a" style="left:285px;top:537px;width:14px;height:14px;background:#c6372a;border-radius:4px"></div>
<div class="a" style="left:303px;top:537px;width:14px;height:14px;background:rgba(43,115,25,0.6);border-radius:4px"></div>
<div class="a" style="left:321px;top:537px;width:14px;height:14px;background:#c6372a;border-radius:4px"></div>
<div class="a" style="left:339px;top:537px;width:14px;height:14px;background:#c6372a;border-radius:4px"></div>
<div class="a" style="left:357px;top:537px;width:14px;height:14px;background:#c6372a;border-radius:4px"></div>
<div class="a" style="left:375px;top:537px;width:14px;height:14px;background:rgba(43,115,25,0.6);border-radius:4px"></div>
<div class="a" style="left:393px;top:537px;width:14px;height:14px;background:#c6372a;border-radius:4px"></div>
<div class="a" style="left:411px;top:537px;width:14px;height:14px;background:rgba(43,115,25,0.6);border-radius:4px"></div>
<div class="a" style="left:429px;top:537px;width:14px;height:14px;background:rgba(43,115,25,0.6);border-radius:4px"></div>
<div class="a" style="left:447px;top:537px;width:14px;height:14px;background:rgba(43,115,25,0.6);border-radius:4px"></div>
<div class="t" style="left:100.60px;top:557.05px;font-size:14px;color:#18181b;letter-spacing:0.151px">end_chain_linear</div>
<div class="a" style="left:92px;top:572px;width:179px;height:1px;background:#ececee;"></div>
<div class="a" style="left:285px;top:557px;width:14px;height:14px;background:rgba(43,115,25,0.6);border-radius:4px"></div>
<div class="a" style="left:303px;top:557px;width:14px;height:14px;background:rgba(43,115,25,0.6);border-radius:4px"></div>
<div class="a" style="left:321px;top:557px;width:14px;height:14px;background:rgba(43,115,25,0.6);border-radius:4px"></div>
<div class="a" style="left:339px;top:557px;width:14px;height:14px;background:rgba(43,115,25,0.6);border-radius:4px"></div>
<div class="a" style="left:357px;top:557px;width:14px;height:14px;background:rgba(43,115,25,0.6);border-radius:4px"></div>
<div class="a" style="left:375px;top:557px;width:14px;height:14px;background:rgba(43,115,25,0.6);border-radius:4px"></div>
<div class="a" style="left:393px;top:557px;width:14px;height:14px;background:rgba(43,115,25,0.6);border-radius:4px"></div>
<div class="a" style="left:411px;top:557px;width:14px;height:14px;background:rgba(43,115,25,0.6);border-radius:4px"></div>
<div class="a" style="left:429px;top:557px;width:14px;height:14px;background:rgba(43,115,25,0.6);border-radius:4px"></div>
<div class="a" style="left:447px;top:557px;width:14px;height:14px;background:rgba(43,115,25,0.6);border-radius:4px"></div>
<div class="t" style="left:100.60px;top:577.05px;font-size:14px;color:#18181b;letter-spacing:-0.002px">chain_t12</div>
<div class="a" style="left:92px;top:592px;width:179px;height:1px;background:#ececee;"></div>
<div class="a" style="left:285px;top:577px;width:14px;height:14px;background:#d6531a;border-radius:4px"></div>
<div class="a" style="left:303px;top:577px;width:14px;height:14px;background:rgba(43,115,25,0.6);border-radius:4px"></div>
<div class="a" style="left:321px;top:577px;width:14px;height:14px;background:#d6531a;border-radius:4px"></div>
<div class="a" style="left:339px;top:577px;width:14px;height:14px;background:#d6531a;border-radius:4px"></div>
<div class="a" style="left:357px;top:577px;width:14px;height:14px;background:#d6531a;border-radius:4px"></div>
<div class="a" style="left:375px;top:577px;width:14px;height:14px;background:rgba(43,115,25,0.6);border-radius:4px"></div>
<div class="a" style="left:393px;top:577px;width:14px;height:14px;background:#d6531a;border-radius:4px"></div>
<div class="a" style="left:411px;top:577px;width:14px;height:14px;background:rgba(43,115,25,0.6);border-radius:4px"></div>
<div class="a" style="left:429px;top:577px;width:14px;height:14px;background:rgba(43,115,25,0.6);border-radius:4px"></div>
<div class="a" style="left:447px;top:577px;width:14px;height:14px;background:rgba(43,115,25,0.6);border-radius:4px"></div>
<div class="t" style="left:100.60px;top:597.05px;font-size:14px;color:#18181b;letter-spacing:0.035px">chain_t13</div>
<div class="a" style="left:92px;top:612px;width:179px;height:1px;background:#ececee;"></div>
<div class="a" style="left:285px;top:597px;width:14px;height:14px;background:#d6531a;border-radius:4px"></div>
<div class="a" style="left:303px;top:597px;width:14px;height:14px;background:rgba(43,115,25,0.6);border-radius:4px"></div>
<div class="a" style="left:321px;top:597px;width:14px;height:14px;background:#d6531a;border-radius:4px"></div>
<div class="a" style="left:339px;top:597px;width:14px;height:14px;background:#d6531a;border-radius:4px"></div>
<div class="a" style="left:357px;top:597px;width:14px;height:14px;background:#d6531a;border-radius:4px"></div>
<div class="a" style="left:375px;top:597px;width:14px;height:14px;background:rgba(43,115,25,0.6);border-radius:4px"></div>
<div class="a" style="left:393px;top:597px;width:14px;height:14px;background:#d6531a;border-radius:4px"></div>
<div class="a" style="left:411px;top:597px;width:14px;height:14px;background:rgba(43,115,25,0.6);border-radius:4px"></div>
<div class="a" style="left:429px;top:597px;width:14px;height:14px;background:rgba(43,115,25,0.6);border-radius:4px"></div>
<div class="a" style="left:447px;top:597px;width:14px;height:14px;background:rgba(43,115,25,0.6);border-radius:4px"></div>
<div class="t" style="left:100.60px;top:617.05px;font-size:14px;color:#18181b;letter-spacing:0.035px">chain_t14</div>
<div class="a" style="left:92px;top:632px;width:179px;height:1px;background:#ececee;"></div>
<div class="a" style="left:285px;top:617px;width:14px;height:14px;background:#d6531a;border-radius:4px"></div>
<div class="a" style="left:303px;top:617px;width:14px;height:14px;background:rgba(43,115,25,0.6);border-radius:4px"></div>
<div class="a" style="left:321px;top:617px;width:14px;height:14px;background:#d6531a;border-radius:4px"></div>
<div class="a" style="left:339px;top:617px;width:14px;height:14px;background:#d6531a;border-radius:4px"></div>
<div class="a" style="left:357px;top:617px;width:14px;height:14px;background:#d6531a;border-radius:4px"></div>
<div class="a" style="left:375px;top:617px;width:14px;height:14px;background:rgba(43,115,25,0.6);border-radius:4px"></div>
<div class="a" style="left:393px;top:617px;width:14px;height:14px;background:#d6531a;border-radius:4px"></div>
<div class="a" style="left:411px;top:617px;width:14px;height:14px;background:rgba(43,115,25,0.6);border-radius:4px"></div>
<div class="a" style="left:429px;top:617px;width:14px;height:14px;background:rgba(43,115,25,0.6);border-radius:4px"></div>
<div class="a" style="left:447px;top:617px;width:14px;height:14px;background:rgba(43,115,25,0.6);border-radius:4px"></div>
<div class="t" style="left:100.60px;top:637.05px;font-size:14px;color:#18181b;letter-spacing:0.035px">chain_t15</div>
<div class="a" style="left:92px;top:652px;width:179px;height:1px;background:#ececee;"></div>
<div class="a" style="left:285px;top:637px;width:14px;height:14px;background:#d6531a;border-radius:4px"></div>
<div class="a" style="left:303px;top:637px;width:14px;height:14px;background:rgba(43,115,25,0.6);border-radius:4px"></div>
<div class="a" style="left:321px;top:637px;width:14px;height:14px;background:#d6531a;border-radius:4px"></div>
<div class="a" style="left:339px;top:637px;width:14px;height:14px;background:#d6531a;border-radius:4px"></div>
<div class="a" style="left:357px;top:637px;width:14px;height:14px;background:#d6531a;border-radius:4px"></div>
<div class="a" style="left:375px;top:637px;width:14px;height:14px;background:rgba(43,115,25,0.6);border-radius:4px"></div>
<div class="a" style="left:393px;top:637px;width:14px;height:14px;background:#d6531a;border-radius:4px"></div>
<div class="a" style="left:411px;top:637px;width:14px;height:14px;background:rgba(43,115,25,0.6);border-radius:4px"></div>
<div class="a" style="left:429px;top:637px;width:14px;height:14px;background:rgba(43,115,25,0.6);border-radius:4px"></div>
<div class="a" style="left:447px;top:637px;width:14px;height:14px;background:rgba(43,115,25,0.6);border-radius:4px"></div>
<div class="t" style="left:100.60px;top:657.05px;font-size:14px;color:#18181b;letter-spacing:0.035px">chain_t16</div>
<div class="a" style="left:92px;top:672px;width:179px;height:1px;background:#ececee;"></div>
<div class="a" style="left:285px;top:657px;width:14px;height:14px;background:#d6531a;border-radius:4px"></div>
<div class="a" style="left:303px;top:657px;width:14px;height:14px;background:rgba(43,115,25,0.6);border-radius:4px"></div>
<div class="a" style="left:321px;top:657px;width:14px;height:14px;background:#d6531a;border-radius:4px"></div>
<div class="a" style="left:339px;top:657px;width:14px;height:14px;background:#d6531a;border-radius:4px"></div>
<div class="a" style="left:357px;top:657px;width:14px;height:14px;background:#d6531a;border-radius:4px"></div>
<div class="a" style="left:375px;top:657px;width:14px;height:14px;background:rgba(43,115,25,0.6);border-radius:4px"></div>
<div class="a" style="left:393px;top:657px;width:14px;height:14px;background:#d6531a;border-radius:4px"></div>
<div class="a" style="left:411px;top:657px;width:14px;height:14px;background:rgba(43,115,25,0.6);border-radius:4px"></div>
<div class="a" style="left:429px;top:657px;width:14px;height:14px;background:rgba(43,115,25,0.6);border-radius:4px"></div>
<div class="a" style="left:447px;top:657px;width:14px;height:14px;background:rgba(43,115,25,0.6);border-radius:4px"></div>
<div class="t" style="left:100.60px;top:677.05px;font-size:14px;color:#18181b;letter-spacing:0.035px">chain_t17</div>
<div class="a" style="left:92px;top:692px;width:179px;height:1px;background:#ececee;"></div>
<div class="a" style="left:285px;top:677px;width:14px;height:14px;background:#d6531a;border-radius:4px"></div>
<div class="a" style="left:303px;top:677px;width:14px;height:14px;background:rgba(43,115,25,0.6);border-radius:4px"></div>
<div class="a" style="left:321px;top:677px;width:14px;height:14px;background:#d6531a;border-radius:4px"></div>
<div class="a" style="left:339px;top:677px;width:14px;height:14px;background:#d6531a;border-radius:4px"></div>
<div class="a" style="left:357px;top:677px;width:14px;height:14px;background:#d6531a;border-radius:4px"></div>
<div class="a" style="left:375px;top:677px;width:14px;height:14px;background:rgba(43,115,25,0.6);border-radius:4px"></div>
<div class="a" style="left:393px;top:677px;width:14px;height:14px;background:#d6531a;border-radius:4px"></div>
<div class="a" style="left:411px;top:677px;width:14px;height:14px;background:rgba(43,115,25,0.6);border-radius:4px"></div>
<div class="a" style="left:429px;top:677px;width:14px;height:14px;background:rgba(43,115,25,0.6);border-radius:4px"></div>
<div class="a" style="left:447px;top:677px;width:14px;height:14px;background:rgba(43,115,25,0.6);border-radius:4px"></div>
<div class="t" style="left:100.60px;top:697.05px;font-size:14px;color:#18181b;letter-spacing:-0.051px">empty_2</div>
<div class="a" style="left:92px;top:712px;width:179px;height:1px;background:#ececee;"></div>
<div class="a" style="left:285px;top:697px;width:14px;height:14px;background:#d6531a;border-radius:4px"></div>
<div class="a" style="left:303px;top:697px;width:14px;height:14px;background:rgba(43,115,25,0.6);border-radius:4px"></div>
<div class="a" style="left:321px;top:697px;width:14px;height:14px;background:#d6531a;border-radius:4px"></div>
<div class="a" style="left:339px;top:697px;width:14px;height:14px;background:#d6531a;border-radius:4px"></div>
<div class="a" style="left:357px;top:697px;width:14px;height:14px;background:#d6531a;border-radius:4px"></div>
<div class="a" style="left:375px;top:697px;width:14px;height:14px;background:rgba(43,115,25,0.6);border-radius:4px"></div>
<div class="a" style="left:393px;top:697px;width:14px;height:14px;background:#d6531a;border-radius:4px"></div>
<div class="a" style="left:411px;top:697px;width:14px;height:14px;background:rgba(43,115,25,0.6);border-radius:4px"></div>
<div class="a" style="left:429px;top:697px;width:14px;height:14px;background:rgba(43,115,25,0.6);border-radius:4px"></div>
<div class="a" style="left:447px;top:697px;width:14px;height:14px;background:rgba(43,115,25,0.6);border-radius:4px"></div>
<div class="t" style="left:100.60px;top:717.05px;font-size:14px;color:#18181b;letter-spacing:0.035px">chain_t18</div>
<div class="a" style="left:92px;top:732px;width:179px;height:1px;background:#ececee;"></div>
<div class="a" style="left:285px;top:717px;width:14px;height:14px;background:#d6531a;border-radius:4px"></div>
<div class="a" style="left:303px;top:717px;width:14px;height:14px;background:rgba(43,115,25,0.6);border-radius:4px"></div>
<div class="a" style="left:321px;top:717px;width:14px;height:14px;background:#d6531a;border-radius:4px"></div>
<div class="a" style="left:339px;top:717px;width:14px;height:14px;background:#d6531a;border-radius:4px"></div>
<div class="a" style="left:357px;top:717px;width:14px;height:14px;background:#d6531a;border-radius:4px"></div>
<div class="a" style="left:375px;top:717px;width:14px;height:14px;background:rgba(43,115,25,0.6);border-radius:4px"></div>
<div class="a" style="left:393px;top:717px;width:14px;height:14px;background:#d6531a;border-radius:4px"></div>
<div class="a" style="left:411px;top:717px;width:14px;height:14px;background:rgba(43,115,25,0.6);border-radius:4px"></div>
<div class="a" style="left:429px;top:717px;width:14px;height:14px;background:rgba(43,115,25,0.6);border-radius:4px"></div>
<div class="a" style="left:447px;top:717px;width:14px;height:14px;background:rgba(43,115,25,0.6);border-radius:4px"></div>
<div class="t" style="left:100.60px;top:737.05px;font-size:14px;color:#18181b;letter-spacing:0.035px">chain_t19</div>
<div class="a" style="left:92px;top:752px;width:179px;height:1px;background:#ececee;"></div>
<div class="a" style="left:285px;top:737px;width:14px;height:14px;background:#d6531a;border-radius:4px"></div>
<div class="a" style="left:303px;top:737px;width:14px;height:14px;background:rgba(43,115,25,0.6);border-radius:4px"></div>
<div class="a" style="left:321px;top:737px;width:14px;height:14px;background:#d6531a;border-radius:4px"></div>
<div class="a" style="left:339px;top:737px;width:14px;height:14px;background:#d6531a;border-radius:4px"></div>
<div class="a" style="left:357px;top:737px;width:14px;height:14px;background:#d6531a;border-radius:4px"></div>
<div class="a" style="left:375px;top:737px;width:14px;height:14px;background:rgba(43,115,25,0.6);border-radius:4px"></div>
<div class="a" style="left:393px;top:737px;width:14px;height:14px;background:#d6531a;border-radius:4px"></div>
<div class="a" style="left:411px;top:737px;width:14px;height:14px;background:rgba(43,115,25,0.6);border-radius:4px"></div>
<div class="a" style="left:429px;top:737px;width:14px;height:14px;background:rgba(43,115,25,0.6);border-radius:4px"></div>
<div class="a" style="left:447px;top:737px;width:14px;height:14px;background:rgba(43,115,25,0.6);border-radius:4px"></div>
<div class="t" style="left:100.60px;top:757.05px;font-size:14px;color:#18181b;letter-spacing:0.172px">end_chain</div>
<div class="a" style="left:92px;top:772px;width:179px;height:1px;background:#ececee;"></div>
<div class="a" style="left:285px;top:757px;width:14px;height:14px;background:#d6531a;border-radius:4px"></div>
<div class="a" style="left:303px;top:757px;width:14px;height:14px;background:rgba(43,115,25,0.6);border-radius:4px"></div>
<div class="a" style="left:321px;top:757px;width:14px;height:14px;background:#d6531a;border-radius:4px"></div>
<div class="a" style="left:339px;top:757px;width:14px;height:14px;background:#d6531a;border-radius:4px"></div>
<div class="a" style="left:357px;top:757px;width:14px;height:14px;background:#d6531a;border-radius:4px"></div>
<div class="a" style="left:375px;top:757px;width:14px;height:14px;background:rgba(43,115,25,0.6);border-radius:4px"></div>
<div class="a" style="left:393px;top:757px;width:14px;height:14px;background:#d6531a;border-radius:4px"></div>
<div class="a" style="left:411px;top:757px;width:14px;height:14px;background:rgba(43,115,25,0.6);border-radius:4px"></div>
<div class="a" style="left:429px;top:757px;width:14px;height:14px;background:rgba(43,115,25,0.6);border-radius:4px"></div>
<div class="a" style="left:447px;top:757px;width:14px;height:14px;background:rgba(43,115,25,0.6);border-radius:4px"></div>
<svg style="left:0;top:0" width="1" height="1"><path d="M288.3 223.5 L290.7 226.3 L295.8 221.2" stroke="#fff" stroke-width="1.1" fill="none" stroke-linecap="round" stroke-linejoin="round"/><path d="M306.3 223.5 L308.7 226.3 L313.8 221.2" stroke="#fff" stroke-width="1.1" fill="none" stroke-linecap="round" stroke-linejoin="round"/><path d="M324.3 223.5 L326.7 226.3 L331.8 221.2" stroke="#fff" stroke-width="1.1" fill="none" stroke-linecap="round" stroke-linejoin="round"/><path d="M342.3 223.5 L344.7 226.3 L349.8 221.2" stroke="#fff" stroke-width="1.1" fill="none" stroke-linecap="round" stroke-linejoin="round"/><path d="M360.3 223.5 L362.7 226.3 L367.8 221.2" stroke="#fff" stroke-width="1.1" fill="none" stroke-linecap="round" stroke-linejoin="round"/><path d="M378.3 223.5 L380.7 226.3 L385.8 221.2" stroke="#fff" stroke-width="1.1" fill="none" stroke-linecap="round" stroke-linejoin="round"/><path d="M396.3 223.5 L398.7 226.3 L403.8 221.2" stroke="#fff" stroke-width="1.1" fill="none" stroke-linecap="round" stroke-linejoin="round"/><path d="M414.3 223.5 L416.7 226.3 L421.8 221.2" stroke="#fff" stroke-width="1.1" fill="none" stroke-linecap="round" stroke-linejoin="round"/><path d="M432.3 223.5 L434.7 226.3 L439.8 221.2" stroke="#fff" stroke-width="1.1" fill="none" stroke-linecap="round" stroke-linejoin="round"/><path d="M450.3 223.5 L452.7 226.3 L457.8 221.2" stroke="#fff" stroke-width="1.1" fill="none" stroke-linecap="round" stroke-linejoin="round"/><path d="M288.3 243.5 L290.7 246.3 L295.8 241.2" stroke="#fff" stroke-width="1.1" fill="none" stroke-linecap="round" stroke-linejoin="round"/><path d="M306.3 243.5 L308.7 246.3 L313.8 241.2" stroke="#fff" stroke-width="1.1" fill="none" stroke-linecap="round" stroke-linejoin="round"/><path d="M324.3 243.5 L326.7 246.3 L331.8 241.2" stroke="#fff" stroke-width="1.1" fill="none" stroke-linecap="round" stroke-linejoin="round"/><path d="M342.3 243.5 L344.7 246.3 L349.8 241.2" stroke="#fff" stroke-width="1.1" fill="none" stroke-linecap="round" stroke-linejoin="round"/><path d="M360.3 243.5 L362.7 246.3 L367.8 241.2" stroke="#fff" stroke-width="1.1" fill="none" stroke-linecap="round" stroke-linejoin="round"/><path d="M378.3 243.5 L380.7 246.3 L385.8 241.2" stroke="#fff" stroke-width="1.1" fill="none" stroke-linecap="round" stroke-linejoin="round"/><path d="M396.3 243.5 L398.7 246.3 L403.8 241.2" stroke="#fff" stroke-width="1.1" fill="none" stroke-linecap="round" stroke-linejoin="round"/><path d="M414.3 243.5 L416.7 246.3 L421.8 241.2" stroke="#fff" stroke-width="1.1" fill="none" stroke-linecap="round" stroke-linejoin="round"/><path d="M432.3 243.5 L434.7 246.3 L439.8 241.2" stroke="#fff" stroke-width="1.1" fill="none" stroke-linecap="round" stroke-linejoin="round"/><path d="M450.3 243.5 L452.7 246.3 L457.8 241.2" stroke="#fff" stroke-width="1.1" fill="none" stroke-linecap="round" stroke-linejoin="round"/><path d="M288.3 263.5 L290.7 266.3 L295.8 261.2" stroke="#fff" stroke-width="1.1" fill="none" stroke-linecap="round" stroke-linejoin="round"/><path d="M306.3 263.5 L308.7 266.3 L313.8 261.2" stroke="#fff" stroke-width="1.1" fill="none" stroke-linecap="round" stroke-linejoin="round"/><path d="M324.3 263.5 L326.7 266.3 L331.8 261.2" stroke="#fff" stroke-width="1.1" fill="none" stroke-linecap="round" stroke-linejoin="round"/><path d="M342.3 263.5 L344.7 266.3 L349.8 261.2" stroke="#fff" stroke-width="1.1" fill="none" stroke-linecap="round" stroke-linejoin="round"/><path d="M360.3 263.5 L362.7 266.3 L367.8 261.2" stroke="#fff" stroke-width="1.1" fill="none" stroke-linecap="round" stroke-linejoin="round"/><path d="M378.3 263.5 L380.7 266.3 L385.8 261.2" stroke="#fff" stroke-width="1.1" fill="none" stroke-linecap="round" stroke-linejoin="round"/><path d="M396.3 263.5 L398.7 266.3 L403.8 261.2" stroke="#fff" stroke-width="1.1" fill="none" stroke-linecap="round" stroke-linejoin="round"/><path d="M414.3 263.5 L416.7 266.3 L421.8 261.2" stroke="#fff" stroke-width="1.1" fill="none" stroke-linecap="round" stroke-linejoin="round"/><path d="M432.3 263.5 L434.7 266.3 L439.8 261.2" stroke="#fff" stroke-width="1.1" fill="none" stroke-linecap="round" stroke-linejoin="round"/><path d="M450.3 263.5 L452.7 266.3 L457.8 261.2" stroke="#fff" stroke-width="1.1" fill="none" stroke-linecap="round" stroke-linejoin="round"/><path d="M288.3 283.5 L290.7 286.3 L295.8 281.2" stroke="#fff" stroke-width="1.1" fill="none" stroke-linecap="round" stroke-linejoin="round"/><path d="M306.3 283.5 L308.7 286.3 L313.8 281.2" stroke="#fff" stroke-width="1.1" fill="none" stroke-linecap="round" stroke-linejoin="round"/><path d="M324.3 283.5 L326.7 286.3 L331.8 281.2" stroke="#fff" stroke-width="1.1" fill="none" stroke-linecap="round" stroke-linejoin="round"/><path d="M342.3 283.5 L344.7 286.3 L349.8 281.2" stroke="#fff" stroke-width="1.1" fill="none" stroke-linecap="round" stroke-linejoin="round"/><path d="M360.3 283.5 L362.7 286.3 L367.8 281.2" stroke="#fff" stroke-width="1.1" fill="none" stroke-linecap="round" stroke-linejoin="round"/><path d="M378.3 283.5 L380.7 286.3 L385.8 281.2" stroke="#fff" stroke-width="1.1" fill="none" stroke-linecap="round" stroke-linejoin="round"/><path d="M396.3 283.5 L398.7 286.3 L403.8 281.2" stroke="#fff" stroke-width="1.1" fill="none" stroke-linecap="round" stroke-linejoin="round"/><path d="M414.3 283.5 L416.7 286.3 L421.8 281.2" stroke="#fff" stroke-width="1.1" fill="none" stroke-linecap="round" stroke-linejoin="round"/><path d="M432.3 283.5 L434.7 286.3 L439.8 281.2" stroke="#fff" stroke-width="1.1" fill="none" stroke-linecap="round" stroke-linejoin="round"/><path d="M450.3 283.5 L452.7 286.3 L457.8 281.2" stroke="#fff" stroke-width="1.1" fill="none" stroke-linecap="round" stroke-linejoin="round"/><path d="M288.3 303.5 L290.7 306.3 L295.8 301.2" stroke="#fff" stroke-width="1.1" fill="none" stroke-linecap="round" stroke-linejoin="round"/><path d="M306.3 303.5 L308.7 306.3 L313.8 301.2" stroke="#fff" stroke-width="1.1" fill="none" stroke-linecap="round" stroke-linejoin="round"/><path d="M324.3 303.5 L326.7 306.3 L331.8 301.2" stroke="#fff" stroke-width="1.1" fill="none" stroke-linecap="round" stroke-linejoin="round"/><path d="M342.3 303.5 L344.7 306.3 L349.8 301.2" stroke="#fff" stroke-width="1.1" fill="none" stroke-linecap="round" stroke-linejoin="round"/><path d="M360.3 303.5 L362.7 306.3 L367.8 301.2" stroke="#fff" stroke-width="1.1" fill="none" stroke-linecap="round" stroke-linejoin="round"/><path d="M378.3 303.5 L380.7 306.3 L385.8 301.2" stroke="#fff" stroke-width="1.1" fill="none" stroke-linecap="round" stroke-linejoin="round"/><path d="M396.3 303.5 L398.7 306.3 L403.8 301.2" stroke="#fff" stroke-width="1.1" fill="none" stroke-linecap="round" stroke-linejoin="round"/><path d="M414.3 303.5 L416.7 306.3 L421.8 301.2" stroke="#fff" stroke-width="1.1" fill="none" stroke-linecap="round" stroke-linejoin="round"/><path d="M432.3 303.5 L434.7 306.3 L439.8 301.2" stroke="#fff" stroke-width="1.1" fill="none" stroke-linecap="round" stroke-linejoin="round"/><path d="M450.3 303.5 L452.7 306.3 L457.8 301.2" stroke="#fff" stroke-width="1.1" fill="none" stroke-linecap="round" stroke-linejoin="round"/><path d="M288.3 323.5 L290.7 326.3 L295.8 321.2" stroke="#fff" stroke-width="1.1" fill="none" stroke-linecap="round" stroke-linejoin="round"/><path d="M306.3 323.5 L308.7 326.3 L313.8 321.2" stroke="#fff" stroke-width="1.1" fill="none" stroke-linecap="round" stroke-linejoin="round"/><path d="M324.3 323.5 L326.7 326.3 L331.8 321.2" stroke="#fff" stroke-width="1.1" fill="none" stroke-linecap="round" stroke-linejoin="round"/><path d="M342.3 323.5 L344.7 326.3 L349.8 321.2" stroke="#fff" stroke-width="1.1" fill="none" stroke-linecap="round" stroke-linejoin="round"/><path d="M360.3 323.5 L362.7 326.3 L367.8 321.2" stroke="#fff" stroke-width="1.1" fill="none" stroke-linecap="round" stroke-linejoin="round"/><path d="M378.3 323.5 L380.7 326.3 L385.8 321.2" stroke="#fff" stroke-width="1.1" fill="none" stroke-linecap="round" stroke-linejoin="round"/><path d="M396.3 323.5 L398.7 326.3 L403.8 321.2" stroke="#fff" stroke-width="1.1" fill="none" stroke-linecap="round" stroke-linejoin="round"/><path d="M414.3 323.5 L416.7 326.3 L421.8 321.2" stroke="#fff" stroke-width="1.1" fill="none" stroke-linecap="round" stroke-linejoin="round"/><path d="M432.3 323.5 L434.7 326.3 L439.8 321.2" stroke="#fff" stroke-width="1.1" fill="none" stroke-linecap="round" stroke-linejoin="round"/><path d="M450.3 323.5 L452.7 326.3 L457.8 321.2" stroke="#fff" stroke-width="1.1" fill="none" stroke-linecap="round" stroke-linejoin="round"/><path d="M288.3 343.5 L290.7 346.3 L295.8 341.2" stroke="#fff" stroke-width="1.1" fill="none" stroke-linecap="round" stroke-linejoin="round"/><path d="M306.3 343.5 L308.7 346.3 L313.8 341.2" stroke="#fff" stroke-width="1.1" fill="none" stroke-linecap="round" stroke-linejoin="round"/><path d="M324.3 343.5 L326.7 346.3 L331.8 341.2" stroke="#fff" stroke-width="1.1" fill="none" stroke-linecap="round" stroke-linejoin="round"/><path d="M342.3 343.5 L344.7 346.3 L349.8 341.2" stroke="#fff" stroke-width="1.1" fill="none" stroke-linecap="round" stroke-linejoin="round"/><path d="M360.3 343.5 L362.7 346.3 L367.8 341.2" stroke="#fff" stroke-width="1.1" fill="none" stroke-linecap="round" stroke-linejoin="round"/><path d="M378.3 343.5 L380.7 346.3 L385.8 341.2" stroke="#fff" stroke-width="1.1" fill="none" stroke-linecap="round" stroke-linejoin="round"/><path d="M396.3 343.5 L398.7 346.3 L403.8 341.2" stroke="#fff" stroke-width="1.1" fill="none" stroke-linecap="round" stroke-linejoin="round"/><path d="M414.3 343.5 L416.7 346.3 L421.8 341.2" stroke="#fff" stroke-width="1.1" fill="none" stroke-linecap="round" stroke-linejoin="round"/><path d="M432.3 343.5 L434.7 346.3 L439.8 341.2" stroke="#fff" stroke-width="1.1" fill="none" stroke-linecap="round" stroke-linejoin="round"/><path d="M450.3 343.5 L452.7 346.3 L457.8 341.2" stroke="#fff" stroke-width="1.1" fill="none" stroke-linecap="round" stroke-linejoin="round"/><path d="M288.3 363.5 L290.7 366.3 L295.8 361.2" stroke="#fff" stroke-width="1.1" fill="none" stroke-linecap="round" stroke-linejoin="round"/><path d="M306.3 363.5 L308.7 366.3 L313.8 361.2" stroke="#fff" stroke-width="1.1" fill="none" stroke-linecap="round" stroke-linejoin="round"/><path d="M324.3 363.5 L326.7 366.3 L331.8 361.2" stroke="#fff" stroke-width="1.1" fill="none" stroke-linecap="round" stroke-linejoin="round"/><path d="M342.3 363.5 L344.7 366.3 L349.8 361.2" stroke="#fff" stroke-width="1.1" fill="none" stroke-linecap="round" stroke-linejoin="round"/><path d="M360.3 363.5 L362.7 366.3 L367.8 361.2" stroke="#fff" stroke-width="1.1" fill="none" stroke-linecap="round" stroke-linejoin="round"/><path d="M378.3 363.5 L380.7 366.3 L385.8 361.2" stroke="#fff" stroke-width="1.1" fill="none" stroke-linecap="round" stroke-linejoin="round"/><path d="M396.3 363.5 L398.7 366.3 L403.8 361.2" stroke="#fff" stroke-width="1.1" fill="none" stroke-linecap="round" stroke-linejoin="round"/><path d="M414.3 363.5 L416.7 366.3 L421.8 361.2" stroke="#fff" stroke-width="1.1" fill="none" stroke-linecap="round" stroke-linejoin="round"/><path d="M432.3 363.5 L434.7 366.3 L439.8 361.2" stroke="#fff" stroke-width="1.1" fill="none" stroke-linecap="round" stroke-linejoin="round"/><path d="M450.3 363.5 L452.7 366.3 L457.8 361.2" stroke="#fff" stroke-width="1.1" fill="none" stroke-linecap="round" stroke-linejoin="round"/><path d="M288.3 383.5 L290.7 386.3 L295.8 381.2" stroke="#fff" stroke-width="1.1" fill="none" stroke-linecap="round" stroke-linejoin="round"/><path d="M306.3 383.5 L308.7 386.3 L313.8 381.2" stroke="#fff" stroke-width="1.1" fill="none" stroke-linecap="round" stroke-linejoin="round"/><path d="M324.3 383.5 L326.7 386.3 L331.8 381.2" stroke="#fff" stroke-width="1.1" fill="none" stroke-linecap="round" stroke-linejoin="round"/><path d="M342.3 383.5 L344.7 386.3 L349.8 381.2" stroke="#fff" stroke-width="1.1" fill="none" stroke-linecap="round" stroke-linejoin="round"/><path d="M360.3 383.5 L362.7 386.3 L367.8 381.2" stroke="#fff" stroke-width="1.1" fill="none" stroke-linecap="round" stroke-linejoin="round"/><path d="M378.3 383.5 L380.7 386.3 L385.8 381.2" stroke="#fff" stroke-width="1.1" fill="none" stroke-linecap="round" stroke-linejoin="round"/><path d="M396.3 383.5 L398.7 386.3 L403.8 381.2" stroke="#fff" stroke-width="1.1" fill="none" stroke-linecap="round" stroke-linejoin="round"/><path d="M414.3 383.5 L416.7 386.3 L421.8 381.2" stroke="#fff" stroke-width="1.1" fill="none" stroke-linecap="round" stroke-linejoin="round"/><path d="M432.3 383.5 L434.7 386.3 L439.8 381.2" stroke="#fff" stroke-width="1.1" fill="none" stroke-linecap="round" stroke-linejoin="round"/><path d="M450.3 383.5 L452.7 386.3 L457.8 381.2" stroke="#fff" stroke-width="1.1" fill="none" stroke-linecap="round" stroke-linejoin="round"/><path d="M288.3 403.5 L290.7 406.3 L295.8 401.2" stroke="#fff" stroke-width="1.1" fill="none" stroke-linecap="round" stroke-linejoin="round"/><path d="M306.3 403.5 L308.7 406.3 L313.8 401.2" stroke="#fff" stroke-width="1.1" fill="none" stroke-linecap="round" stroke-linejoin="round"/><path d="M324.3 403.5 L326.7 406.3 L331.8 401.2" stroke="#fff" stroke-width="1.1" fill="none" stroke-linecap="round" stroke-linejoin="round"/><path d="M342.3 403.5 L344.7 406.3 L349.8 401.2" stroke="#fff" stroke-width="1.1" fill="none" stroke-linecap="round" stroke-linejoin="round"/><path d="M360.3 403.5 L362.7 406.3 L367.8 401.2" stroke="#fff" stroke-width="1.1" fill="none" stroke-linecap="round" stroke-linejoin="round"/><path d="M378.3 403.5 L380.7 406.3 L385.8 401.2" stroke="#fff" stroke-width="1.1" fill="none" stroke-linecap="round" stroke-linejoin="round"/><path d="M396.3 403.5 L398.7 406.3 L403.8 401.2" stroke="#fff" stroke-width="1.1" fill="none" stroke-linecap="round" stroke-linejoin="round"/><path d="M414.3 403.5 L416.7 406.3 L421.8 401.2" stroke="#fff" stroke-width="1.1" fill="none" stroke-linecap="round" stroke-linejoin="round"/><path d="M432.3 403.5 L434.7 406.3 L439.8 401.2" stroke="#fff" stroke-width="1.1" fill="none" stroke-linecap="round" stroke-linejoin="round"/><path d="M450.3 403.5 L452.7 406.3 L457.8 401.2" stroke="#fff" stroke-width="1.1" fill="none" stroke-linecap="round" stroke-linejoin="round"/><path d="M288.3 423.5 L290.7 426.3 L295.8 421.2" stroke="#fff" stroke-width="1.1" fill="none" stroke-linecap="round" stroke-linejoin="round"/><path d="M306.3 423.5 L308.7 426.3 L313.8 421.2" stroke="#fff" stroke-width="1.1" fill="none" stroke-linecap="round" stroke-linejoin="round"/><path d="M324.3 423.5 L326.7 426.3 L331.8 421.2" stroke="#fff" stroke-width="1.1" fill="none" stroke-linecap="round" stroke-linejoin="round"/><path d="M342.3 423.5 L344.7 426.3 L349.8 421.2" stroke="#fff" stroke-width="1.1" fill="none" stroke-linecap="round" stroke-linejoin="round"/><path d="M360.3 423.5 L362.7 426.3 L367.8 421.2" stroke="#fff" stroke-width="1.1" fill="none" stroke-linecap="round" stroke-linejoin="round"/><path d="M378.3 423.5 L380.7 426.3 L385.8 421.2" stroke="#fff" stroke-width="1.1" fill="none" stroke-linecap="round" stroke-linejoin="round"/><path d="M396.3 423.5 L398.7 426.3 L403.8 421.2" stroke="#fff" stroke-width="1.1" fill="none" stroke-linecap="round" stroke-linejoin="round"/><path d="M414.3 423.5 L416.7 426.3 L421.8 421.2" stroke="#fff" stroke-width="1.1" fill="none" stroke-linecap="round" stroke-linejoin="round"/><path d="M432.3 423.5 L434.7 426.3 L439.8 421.2" stroke="#fff" stroke-width="1.1" fill="none" stroke-linecap="round" stroke-linejoin="round"/><path d="M450.3 423.5 L452.7 426.3 L457.8 421.2" stroke="#fff" stroke-width="1.1" fill="none" stroke-linecap="round" stroke-linejoin="round"/><path d="M288.3 443.5 L290.7 446.3 L295.8 441.2" stroke="#fff" stroke-width="1.1" fill="none" stroke-linecap="round" stroke-linejoin="round"/><path d="M306.3 443.5 L308.7 446.3 L313.8 441.2" stroke="#fff" stroke-width="1.1" fill="none" stroke-linecap="round" stroke-linejoin="round"/><path d="M324.3 443.5 L326.7 446.3 L331.8 441.2" stroke="#fff" stroke-width="1.1" fill="none" stroke-linecap="round" stroke-linejoin="round"/><path d="M342.3 443.5 L344.7 446.3 L349.8 441.2" stroke="#fff" stroke-width="1.1" fill="none" stroke-linecap="round" stroke-linejoin="round"/><path d="M360.3 443.5 L362.7 446.3 L367.8 441.2" stroke="#fff" stroke-width="1.1" fill="none" stroke-linecap="round" stroke-linejoin="round"/><path d="M378.3 443.5 L380.7 446.3 L385.8 441.2" stroke="#fff" stroke-width="1.1" fill="none" stroke-linecap="round" stroke-linejoin="round"/><path d="M396.3 443.5 L398.7 446.3 L403.8 441.2" stroke="#fff" stroke-width="1.1" fill="none" stroke-linecap="round" stroke-linejoin="round"/><path d="M414.3 443.5 L416.7 446.3 L421.8 441.2" stroke="#fff" stroke-width="1.1" fill="none" stroke-linecap="round" stroke-linejoin="round"/><path d="M432.3 443.5 L434.7 446.3 L439.8 441.2" stroke="#fff" stroke-width="1.1" fill="none" stroke-linecap="round" stroke-linejoin="round"/><path d="M450.3 443.5 L452.7 446.3 L457.8 441.2" stroke="#fff" stroke-width="1.1" fill="none" stroke-linecap="round" stroke-linejoin="round"/><path d="M288.3 463.5 L290.7 466.3 L295.8 461.2" stroke="#fff" stroke-width="1.1" fill="none" stroke-linecap="round" stroke-linejoin="round"/><path d="M306.3 463.5 L308.7 466.3 L313.8 461.2" stroke="#fff" stroke-width="1.1" fill="none" stroke-linecap="round" stroke-linejoin="round"/><path d="M324.3 463.5 L326.7 466.3 L331.8 461.2" stroke="#fff" stroke-width="1.1" fill="none" stroke-linecap="round" stroke-linejoin="round"/><path d="M342.3 463.5 L344.7 466.3 L349.8 461.2" stroke="#fff" stroke-width="1.1" fill="none" stroke-linecap="round" stroke-linejoin="round"/><path d="M360.3 463.5 L362.7 466.3 L367.8 461.2" stroke="#fff" stroke-width="1.1" fill="none" stroke-linecap="round" stroke-linejoin="round"/><path d="M378.3 463.5 L380.7 466.3 L385.8 461.2" stroke="#fff" stroke-width="1.1" fill="none" stroke-linecap="round" stroke-linejoin="round"/><path d="M396.3 463.5 L398.7 466.3 L403.8 461.2" stroke="#fff" stroke-width="1.1" fill="none" stroke-linecap="round" stroke-linejoin="round"/><path d="M414.3 463.5 L416.7 466.3 L421.8 461.2" stroke="#fff" stroke-width="1.1" fill="none" stroke-linecap="round" stroke-linejoin="round"/><path d="M432.3 463.5 L434.7 466.3 L439.8 461.2" stroke="#fff" stroke-width="1.1" fill="none" stroke-linecap="round" stroke-linejoin="round"/><path d="M450.3 463.5 L452.7 466.3 L457.8 461.2" stroke="#fff" stroke-width="1.1" fill="none" stroke-linecap="round" stroke-linejoin="round"/><path d="M288.3 483.5 L290.7 486.3 L295.8 481.2" stroke="#fff" stroke-width="1.1" fill="none" stroke-linecap="round" stroke-linejoin="round"/><path d="M306.3 483.5 L308.7 486.3 L313.8 481.2" stroke="#fff" stroke-width="1.1" fill="none" stroke-linecap="round" stroke-linejoin="round"/><path d="M324.3 483.5 L326.7 486.3 L331.8 481.2" stroke="#fff" stroke-width="1.1" fill="none" stroke-linecap="round" stroke-linejoin="round"/><path d="M342.3 483.5 L344.7 486.3 L349.8 481.2" stroke="#fff" stroke-width="1.1" fill="none" stroke-linecap="round" stroke-linejoin="round"/><path d="M360.3 483.5 L362.7 486.3 L367.8 481.2" stroke="#fff" stroke-width="1.1" fill="none" stroke-linecap="round" stroke-linejoin="round"/><path d="M378.3 483.5 L380.7 486.3 L385.8 481.2" stroke="#fff" stroke-width="1.1" fill="none" stroke-linecap="round" stroke-linejoin="round"/><path d="M396.3 483.5 L398.7 486.3 L403.8 481.2" stroke="#fff" stroke-width="1.1" fill="none" stroke-linecap="round" stroke-linejoin="round"/><path d="M414.3 483.5 L416.7 486.3 L421.8 481.2" stroke="#fff" stroke-width="1.1" fill="none" stroke-linecap="round" stroke-linejoin="round"/><path d="M432.3 483.5 L434.7 486.3 L439.8 481.2" stroke="#fff" stroke-width="1.1" fill="none" stroke-linecap="round" stroke-linejoin="round"/><path d="M450.3 483.5 L452.7 486.3 L457.8 481.2" stroke="#fff" stroke-width="1.1" fill="none" stroke-linecap="round" stroke-linejoin="round"/><path d="M288.3 503.5 L290.7 506.3 L295.8 501.2" stroke="#fff" stroke-width="1.1" fill="none" stroke-linecap="round" stroke-linejoin="round"/><path d="M306.3 503.5 L308.7 506.3 L313.8 501.2" stroke="#fff" stroke-width="1.1" fill="none" stroke-linecap="round" stroke-linejoin="round"/><path d="M324.3 503.5 L326.7 506.3 L331.8 501.2" stroke="#fff" stroke-width="1.1" fill="none" stroke-linecap="round" stroke-linejoin="round"/><path d="M342.3 503.5 L344.7 506.3 L349.8 501.2" stroke="#fff" stroke-width="1.1" fill="none" stroke-linecap="round" stroke-linejoin="round"/><path d="M360.3 503.5 L362.7 506.3 L367.8 501.2" stroke="#fff" stroke-width="1.1" fill="none" stroke-linecap="round" stroke-linejoin="round"/><path d="M378.3 503.5 L380.7 506.3 L385.8 501.2" stroke="#fff" stroke-width="1.1" fill="none" stroke-linecap="round" stroke-linejoin="round"/><path d="M396.3 503.5 L398.7 506.3 L403.8 501.2" stroke="#fff" stroke-width="1.1" fill="none" stroke-linecap="round" stroke-linejoin="round"/><path d="M414.3 503.5 L416.7 506.3 L421.8 501.2" stroke="#fff" stroke-width="1.1" fill="none" stroke-linecap="round" stroke-linejoin="round"/><path d="M432.3 503.5 L434.7 506.3 L439.8 501.2" stroke="#fff" stroke-width="1.1" fill="none" stroke-linecap="round" stroke-linejoin="round"/><path d="M450.3 503.5 L452.7 506.3 L457.8 501.2" stroke="#fff" stroke-width="1.1" fill="none" stroke-linecap="round" stroke-linejoin="round"/><path d="M288.3 523.5 L290.7 526.3 L295.8 521.2" stroke="#fff" stroke-width="1.1" fill="none" stroke-linecap="round" stroke-linejoin="round"/><path d="M306.3 523.5 L308.7 526.3 L313.8 521.2" stroke="#fff" stroke-width="1.1" fill="none" stroke-linecap="round" stroke-linejoin="round"/><path d="M324.3 523.5 L326.7 526.3 L331.8 521.2" stroke="#fff" stroke-width="1.1" fill="none" stroke-linecap="round" stroke-linejoin="round"/><path d="M342.3 523.5 L344.7 526.3 L349.8 521.2" stroke="#fff" stroke-width="1.1" fill="none" stroke-linecap="round" stroke-linejoin="round"/><path d="M360.3 523.5 L362.7 526.3 L367.8 521.2" stroke="#fff" stroke-width="1.1" fill="none" stroke-linecap="round" stroke-linejoin="round"/><path d="M378.3 523.5 L380.7 526.3 L385.8 521.2" stroke="#fff" stroke-width="1.1" fill="none" stroke-linecap="round" stroke-linejoin="round"/><path d="M396.3 523.5 L398.7 526.3 L403.8 521.2" stroke="#fff" stroke-width="1.1" fill="none" stroke-linecap="round" stroke-linejoin="round"/><path d="M414.3 523.5 L416.7 526.3 L421.8 521.2" stroke="#fff" stroke-width="1.1" fill="none" stroke-linecap="round" stroke-linejoin="round"/><path d="M432.3 523.5 L434.7 526.3 L439.8 521.2" stroke="#fff" stroke-width="1.1" fill="none" stroke-linecap="round" stroke-linejoin="round"/><path d="M450.3 523.5 L452.7 526.3 L457.8 521.2" stroke="#fff" stroke-width="1.1" fill="none" stroke-linecap="round" stroke-linejoin="round"/><path d="M289.5 541.5 L294.5 546.5 M294.5 541.5 L289.5 546.5" stroke="#fff" stroke-width="1.15" fill="none" stroke-linecap="round"/><path d="M306.3 543.5 L308.7 546.3 L313.8 541.2" stroke="#fff" stroke-width="1.1" fill="none" stroke-linecap="round" stroke-linejoin="round"/><path d="M325.5 541.5 L330.5 546.5 M330.5 541.5 L325.5 546.5" stroke="#fff" stroke-width="1.15" fill="none" stroke-linecap="round"/><path d="M343.5 541.5 L348.5 546.5 M348.5 541.5 L343.5 546.5" stroke="#fff" stroke-width="1.15" fill="none" stroke-linecap="round"/><path d="M361.5 541.5 L366.5 546.5 M366.5 541.5 L361.5 546.5" stroke="#fff" stroke-width="1.15" fill="none" stroke-linecap="round"/><path d="M378.3 543.5 L380.7 546.3 L385.8 541.2" stroke="#fff" stroke-width="1.1" fill="none" stroke-linecap="round" stroke-linejoin="round"/><path d="M397.5 541.5 L402.5 546.5 M402.5 541.5 L397.5 546.5" stroke="#fff" stroke-width="1.15" fill="none" stroke-linecap="round"/><path d="M414.3 543.5 L416.7 546.3 L421.8 541.2" stroke="#fff" stroke-width="1.1" fill="none" stroke-linecap="round" stroke-linejoin="round"/><path d="M432.3 543.5 L434.7 546.3 L439.8 541.2" stroke="#fff" stroke-width="1.1" fill="none" stroke-linecap="round" stroke-linejoin="round"/><path d="M450.3 543.5 L452.7 546.3 L457.8 541.2" stroke="#fff" stroke-width="1.1" fill="none" stroke-linecap="round" stroke-linejoin="round"/><path d="M288.3 563.5 L290.7 566.3 L295.8 561.2" stroke="#fff" stroke-width="1.1" fill="none" stroke-linecap="round" stroke-linejoin="round"/><path d="M306.3 563.5 L308.7 566.3 L313.8 561.2" stroke="#fff" stroke-width="1.1" fill="none" stroke-linecap="round" stroke-linejoin="round"/><path d="M324.3 563.5 L326.7 566.3 L331.8 561.2" stroke="#fff" stroke-width="1.1" fill="none" stroke-linecap="round" stroke-linejoin="round"/><path d="M342.3 563.5 L344.7 566.3 L349.8 561.2" stroke="#fff" stroke-width="1.1" fill="none" stroke-linecap="round" stroke-linejoin="round"/><path d="M360.3 563.5 L362.7 566.3 L367.8 561.2" stroke="#fff" stroke-width="1.1" fill="none" stroke-linecap="round" stroke-linejoin="round"/><path d="M378.3 563.5 L380.7 566.3 L385.8 561.2" stroke="#fff" stroke-width="1.1" fill="none" stroke-linecap="round" stroke-linejoin="round"/><path d="M396.3 563.5 L398.7 566.3 L403.8 561.2" stroke="#fff" stroke-width="1.1" fill="none" stroke-linecap="round" stroke-linejoin="round"/><path d="M414.3 563.5 L416.7 566.3 L421.8 561.2" stroke="#fff" stroke-width="1.1" fill="none" stroke-linecap="round" stroke-linejoin="round"/><path d="M432.3 563.5 L434.7 566.3 L439.8 561.2" stroke="#fff" stroke-width="1.1" fill="none" stroke-linecap="round" stroke-linejoin="round"/><path d="M450.3 563.5 L452.7 566.3 L457.8 561.2" stroke="#fff" stroke-width="1.1" fill="none" stroke-linecap="round" stroke-linejoin="round"/><circle cx="292" cy="584" r="4.6" stroke="#fff" stroke-opacity="0.85" stroke-width="1.15" fill="none" stroke-dasharray="4.6 1.5" transform="rotate(-20 292 584)"/><circle cx="292" cy="584" r="1.8" fill="#fff" fill-opacity="0.75"/><path d="M306.3 583.5 L308.7 586.3 L313.8 581.2" stroke="#fff" stroke-width="1.1" fill="none" stroke-linecap="round" stroke-linejoin="round"/><circle cx="328" cy="584" r="4.6" stroke="#fff" stroke-opacity="0.85" stroke-width="1.15" fill="none" stroke-dasharray="4.6 1.5" transform="rotate(-20 328 584)"/><circle cx="328" cy="584" r="1.8" fill="#fff" fill-opacity="0.75"/><circle cx="346" cy="584" r="4.6" stroke="#fff" stroke-opacity="0.85" stroke-width="1.15" fill="none" stroke-dasharray="4.6 1.5" transform="rotate(-20 346 584)"/><circle cx="346" cy="584" r="1.8" fill="#fff" fill-opacity="0.75"/><circle cx="364" cy="584" r="4.6" stroke="#fff" stroke-opacity="0.85" stroke-width="1.15" fill="none" stroke-dasharray="4.6 1.5" transform="rotate(-20 364 584)"/><circle cx="364" cy="584" r="1.8" fill="#fff" fill-opacity="0.75"/><path d="M378.3 583.5 L380.7 586.3 L385.8 581.2" stroke="#fff" stroke-width="1.1" fill="none" stroke-linecap="round" stroke-linejoin="round"/><circle cx="400" cy="584" r="4.6" stroke="#fff" stroke-opacity="0.85" stroke-width="1.15" fill="none" stroke-dasharray="4.6 1.5" transform="rotate(-20 400 584)"/><circle cx="400" cy="584" r="1.8" fill="#fff" fill-opacity="0.75"/><path d="M414.3 583.5 L416.7 586.3 L421.8 581.2" stroke="#fff" stroke-width="1.1" fill="none" stroke-linecap="round" stroke-linejoin="round"/><path d="M432.3 583.5 L434.7 586.3 L439.8 581.2" stroke="#fff" stroke-width="1.1" fill="none" stroke-linecap="round" stroke-linejoin="round"/><path d="M450.3 583.5 L452.7 586.3 L457.8 581.2" stroke="#fff" stroke-width="1.1" fill="none" stroke-linecap="round" stroke-linejoin="round"/><circle cx="292" cy="604" r="4.6" stroke="#fff" stroke-opacity="0.85" stroke-width="1.15" fill="none" stroke-dasharray="4.6 1.5" transform="rotate(-20 292 604)"/><circle cx="292" cy="604" r="1.8" fill="#fff" fill-opacity="0.75"/><path d="M306.3 603.5 L308.7 606.3 L313.8 601.2" stroke="#fff" stroke-width="1.1" fill="none" stroke-linecap="round" stroke-linejoin="round"/><circle cx="328" cy="604" r="4.6" stroke="#fff" stroke-opacity="0.85" stroke-width="1.15" fill="none" stroke-dasharray="4.6 1.5" transform="rotate(-20 328 604)"/><circle cx="328" cy="604" r="1.8" fill="#fff" fill-opacity="0.75"/><circle cx="346" cy="604" r="4.6" stroke="#fff" stroke-opacity="0.85" stroke-width="1.15" fill="none" stroke-dasharray="4.6 1.5" transform="rotate(-20 346 604)"/><circle cx="346" cy="604" r="1.8" fill="#fff" fill-opacity="0.75"/><circle cx="364" cy="604" r="4.6" stroke="#fff" stroke-opacity="0.85" stroke-width="1.15" fill="none" stroke-dasharray="4.6 1.5" transform="rotate(-20 364 604)"/><circle cx="364" cy="604" r="1.8" fill="#fff" fill-opacity="0.75"/><path d="M378.3 603.5 L380.7 606.3 L385.8 601.2" stroke="#fff" stroke-width="1.1" fill="none" stroke-linecap="round" stroke-linejoin="round"/><circle cx="400" cy="604" r="4.6" stroke="#fff" stroke-opacity="0.85" stroke-width="1.15" fill="none" stroke-dasharray="4.6 1.5" transform="rotate(-20 400 604)"/><circle cx="400" cy="604" r="1.8" fill="#fff" fill-opacity="0.75"/><path d="M414.3 603.5 L416.7 606.3 L421.8 601.2" stroke="#fff" stroke-width="1.1" fill="none" stroke-linecap="round" stroke-linejoin="round"/><path d="M432.3 603.5 L434.7 606.3 L439.8 601.2" stroke="#fff" stroke-width="1.1" fill="none" stroke-linecap="round" stroke-linejoin="round"/><path d="M450.3 603.5 L452.7 606.3 L457.8 601.2" stroke="#fff" stroke-width="1.1" fill="none" stroke-linecap="round" stroke-linejoin="round"/><circle cx="292" cy="624" r="4.6" stroke="#fff" stroke-opacity="0.85" stroke-width="1.15" fill="none" stroke-dasharray="4.6 1.5" transform="rotate(-20 292 624)"/><circle cx="292" cy="624" r="1.8" fill="#fff" fill-opacity="0.75"/><path d="M306.3 623.5 L308.7 626.3 L313.8 621.2" stroke="#fff" stroke-width="1.1" fill="none" stroke-linecap="round" stroke-linejoin="round"/><circle cx="328" cy="624" r="4.6" stroke="#fff" stroke-opacity="0.85" stroke-width="1.15" fill="none" stroke-dasharray="4.6 1.5" transform="rotate(-20 328 624)"/><circle cx="328" cy="624" r="1.8" fill="#fff" fill-opacity="0.75"/><circle cx="346" cy="624" r="4.6" stroke="#fff" stroke-opacity="0.85" stroke-width="1.15" fill="none" stroke-dasharray="4.6 1.5" transform="rotate(-20 346 624)"/><circle cx="346" cy="624" r="1.8" fill="#fff" fill-opacity="0.75"/><circle cx="364" cy="624" r="4.6" stroke="#fff" stroke-opacity="0.85" stroke-width="1.15" fill="none" stroke-dasharray="4.6 1.5" transform="rotate(-20 364 624)"/><circle cx="364" cy="624" r="1.8" fill="#fff" fill-opacity="0.75"/><path d="M378.3 623.5 L380.7 626.3 L385.8 621.2" stroke="#fff" stroke-width="1.1" fill="none" stroke-linecap="round" stroke-linejoin="round"/><circle cx="400" cy="624" r="4.6" stroke="#fff" stroke-opacity="0.85" stroke-width="1.15" fill="none" stroke-dasharray="4.6 1.5" transform="rotate(-20 400 624)"/><circle cx="400" cy="624" r="1.8" fill="#fff" fill-opacity="0.75"/><path d="M414.3 623.5 L416.7 626.3 L421.8 621.2" stroke="#fff" stroke-width="1.1" fill="none" stroke-linecap="round" stroke-linejoin="round"/><path d="M432.3 623.5 L434.7 626.3 L439.8 621.2" stroke="#fff" stroke-width="1.1" fill="none" stroke-linecap="round" stroke-linejoin="round"/><path d="M450.3 623.5 L452.7 626.3 L457.8 621.2" stroke="#fff" stroke-width="1.1" fill="none" stroke-linecap="round" stroke-linejoin="round"/><circle cx="292" cy="644" r="4.6" stroke="#fff" stroke-opacity="0.85" stroke-width="1.15" fill="none" stroke-dasharray="4.6 1.5" transform="rotate(-20 292 644)"/><circle cx="292" cy="644" r="1.8" fill="#fff" fill-opacity="0.75"/><path d="M306.3 643.5 L308.7 646.3 L313.8 641.2" stroke="#fff" stroke-width="1.1" fill="none" stroke-linecap="round" stroke-linejoin="round"/><circle cx="328" cy="644" r="4.6" stroke="#fff" stroke-opacity="0.85" stroke-width="1.15" fill="none" stroke-dasharray="4.6 1.5" transform="rotate(-20 328 644)"/><circle cx="328" cy="644" r="1.8" fill="#fff" fill-opacity="0.75"/><circle cx="346" cy="644" r="4.6" stroke="#fff" stroke-opacity="0.85" stroke-width="1.15" fill="none" stroke-dasharray="4.6 1.5" transform="rotate(-20 346 644)"/><circle cx="346" cy="644" r="1.8" fill="#fff" fill-opacity="0.75"/><circle cx="364" cy="644" r="4.6" stroke="#fff" stroke-opacity="0.85" stroke-width="1.15" fill="none" stroke-dasharray="4.6 1.5" transform="rotate(-20 364 644)"/><circle cx="364" cy="644" r="1.8" fill="#fff" fill-opacity="0.75"/><path d="M378.3 643.5 L380.7 646.3 L385.8 641.2" stroke="#fff" stroke-width="1.1" fill="none" stroke-linecap="round" stroke-linejoin="round"/><circle cx="400" cy="644" r="4.6" stroke="#fff" stroke-opacity="0.85" stroke-width="1.15" fill="none" stroke-dasharray="4.6 1.5" transform="rotate(-20 400 644)"/><circle cx="400" cy="644" r="1.8" fill="#fff" fill-opacity="0.75"/><path d="M414.3 643.5 L416.7 646.3 L421.8 641.2" stroke="#fff" stroke-width="1.1" fill="none" stroke-linecap="round" stroke-linejoin="round"/><path d="M432.3 643.5 L434.7 646.3 L439.8 641.2" stroke="#fff" stroke-width="1.1" fill="none" stroke-linecap="round" stroke-linejoin="round"/><path d="M450.3 643.5 L452.7 646.3 L457.8 641.2" stroke="#fff" stroke-width="1.1" fill="none" stroke-linecap="round" stroke-linejoin="round"/><circle cx="292" cy="664" r="4.6" stroke="#fff" stroke-opacity="0.85" stroke-width="1.15" fill="none" stroke-dasharray="4.6 1.5" transform="rotate(-20 292 664)"/><circle cx="292" cy="664" r="1.8" fill="#fff" fill-opacity="0.75"/><path d="M306.3 663.5 L308.7 666.3 L313.8 661.2" stroke="#fff" stroke-width="1.1" fill="none" stroke-linecap="round" stroke-linejoin="round"/><circle cx="328" cy="664" r="4.6" stroke="#fff" stroke-opacity="0.85" stroke-width="1.15" fill="none" stroke-dasharray="4.6 1.5" transform="rotate(-20 328 664)"/><circle cx="328" cy="664" r="1.8" fill="#fff" fill-opacity="0.75"/><circle cx="346" cy="664" r="4.6" stroke="#fff" stroke-opacity="0.85" stroke-width="1.15" fill="none" stroke-dasharray="4.6 1.5" transform="rotate(-20 346 664)"/><circle cx="346" cy="664" r="1.8" fill="#fff" fill-opacity="0.75"/><circle cx="364" cy="664" r="4.6" stroke="#fff" stroke-opacity="0.85" stroke-width="1.15" fill="none" stroke-dasharray="4.6 1.5" transform="rotate(-20 364 664)"/><circle cx="364" cy="664" r="1.8" fill="#fff" fill-opacity="0.75"/><path d="M378.3 663.5 L380.7 666.3 L385.8 661.2" stroke="#fff" stroke-width="1.1" fill="none" stroke-linecap="round" stroke-linejoin="round"/><circle cx="400" cy="664" r="4.6" stroke="#fff" stroke-opacity="0.85" stroke-width="1.15" fill="none" stroke-dasharray="4.6 1.5" transform="rotate(-20 400 664)"/><circle cx="400" cy="664" r="1.8" fill="#fff" fill-opacity="0.75"/><path d="M414.3 663.5 L416.7 666.3 L421.8 661.2" stroke="#fff" stroke-width="1.1" fill="none" stroke-linecap="round" stroke-linejoin="round"/><path d="M432.3 663.5 L434.7 666.3 L439.8 661.2" stroke="#fff" stroke-width="1.1" fill="none" stroke-linecap="round" stroke-linejoin="round"/><path d="M450.3 663.5 L452.7 666.3 L457.8 661.2" stroke="#fff" stroke-width="1.1" fill="none" stroke-linecap="round" stroke-linejoin="round"/><circle cx="292" cy="684" r="4.6" stroke="#fff" stroke-opacity="0.85" stroke-width="1.15" fill="none" stroke-dasharray="4.6 1.5" transform="rotate(-20 292 684)"/><circle cx="292" cy="684" r="1.8" fill="#fff" fill-opacity="0.75"/><path d="M306.3 683.5 L308.7 686.3 L313.8 681.2" stroke="#fff" stroke-width="1.1" fill="none" stroke-linecap="round" stroke-linejoin="round"/><circle cx="328" cy="684" r="4.6" stroke="#fff" stroke-opacity="0.85" stroke-width="1.15" fill="none" stroke-dasharray="4.6 1.5" transform="rotate(-20 328 684)"/><circle cx="328" cy="684" r="1.8" fill="#fff" fill-opacity="0.75"/><circle cx="346" cy="684" r="4.6" stroke="#fff" stroke-opacity="0.85" stroke-width="1.15" fill="none" stroke-dasharray="4.6 1.5" transform="rotate(-20 346 684)"/><circle cx="346" cy="684" r="1.8" fill="#fff" fill-opacity="0.75"/><circle cx="364" cy="684" r="4.6" stroke="#fff" stroke-opacity="0.85" stroke-width="1.15" fill="none" stroke-dasharray="4.6 1.5" transform="rotate(-20 364 684)"/><circle cx="364" cy="684" r="1.8" fill="#fff" fill-opacity="0.75"/><path d="M378.3 683.5 L380.7 686.3 L385.8 681.2" stroke="#fff" stroke-width="1.1" fill="none" stroke-linecap="round" stroke-linejoin="round"/><circle cx="400" cy="684" r="4.6" stroke="#fff" stroke-opacity="0.85" stroke-width="1.15" fill="none" stroke-dasharray="4.6 1.5" transform="rotate(-20 400 684)"/><circle cx="400" cy="684" r="1.8" fill="#fff" fill-opacity="0.75"/><path d="M414.3 683.5 L416.7 686.3 L421.8 681.2" stroke="#fff" stroke-width="1.1" fill="none" stroke-linecap="round" stroke-linejoin="round"/><path d="M432.3 683.5 L434.7 686.3 L439.8 681.2" stroke="#fff" stroke-width="1.1" fill="none" stroke-linecap="round" stroke-linejoin="round"/><path d="M450.3 683.5 L452.7 686.3 L457.8 681.2" stroke="#fff" stroke-width="1.1" fill="none" stroke-linecap="round" stroke-linejoin="round"/><circle cx="292" cy="704" r="4.6" stroke="#fff" stroke-opacity="0.85" stroke-width="1.15" fill="none" stroke-dasharray="4.6 1.5" transform="rotate(-20 292 704)"/><circle cx="292" cy="704" r="1.8" fill="#fff" fill-opacity="0.75"/><path d="M306.3 703.5 L308.7 706.3 L313.8 701.2" stroke="#fff" stroke-width="1.1" fill="none" stroke-linecap="round" stroke-linejoin="round"/><circle cx="328" cy="704" r="4.6" stroke="#fff" stroke-opacity="0.85" stroke-width="1.15" fill="none" stroke-dasharray="4.6 1.5" transform="rotate(-20 328 704)"/><circle cx="328" cy="704" r="1.8" fill="#fff" fill-opacity="0.75"/><circle cx="346" cy="704" r="4.6" stroke="#fff" stroke-opacity="0.85" stroke-width="1.15" fill="none" stroke-dasharray="4.6 1.5" transform="rotate(-20 346 704)"/><circle cx="346" cy="704" r="1.8" fill="#fff" fill-opacity="0.75"/><circle cx="364" cy="704" r="4.6" stroke="#fff" stroke-opacity="0.85" stroke-width="1.15" fill="none" stroke-dasharray="4.6 1.5" transform="rotate(-20 364 704)"/><circle cx="364" cy="704" r="1.8" fill="#fff" fill-opacity="0.75"/><path d="M378.3 703.5 L380.7 706.3 L385.8 701.2" stroke="#fff" stroke-width="1.1" fill="none" stroke-linecap="round" stroke-linejoin="round"/><circle cx="400" cy="704" r="4.6" stroke="#fff" stroke-opacity="0.85" stroke-width="1.15" fill="none" stroke-dasharray="4.6 1.5" transform="rotate(-20 400 704)"/><circle cx="400" cy="704" r="1.8" fill="#fff" fill-opacity="0.75"/><path d="M414.3 703.5 L416.7 706.3 L421.8 701.2" stroke="#fff" stroke-width="1.1" fill="none" stroke-linecap="round" stroke-linejoin="round"/><path d="M432.3 703.5 L434.7 706.3 L439.8 701.2" stroke="#fff" stroke-width="1.1" fill="none" stroke-linecap="round" stroke-linejoin="round"/><path d="M450.3 703.5 L452.7 706.3 L457.8 701.2" stroke="#fff" stroke-width="1.1" fill="none" stroke-linecap="round" stroke-linejoin="round"/><circle cx="292" cy="724" r="4.6" stroke="#fff" stroke-opacity="0.85" stroke-width="1.15" fill="none" stroke-dasharray="4.6 1.5" transform="rotate(-20 292 724)"/><circle cx="292" cy="724" r="1.8" fill="#fff" fill-opacity="0.75"/><path d="M306.3 723.5 L308.7 726.3 L313.8 721.2" stroke="#fff" stroke-width="1.1" fill="none" stroke-linecap="round" stroke-linejoin="round"/><circle cx="328" cy="724" r="4.6" stroke="#fff" stroke-opacity="0.85" stroke-width="1.15" fill="none" stroke-dasharray="4.6 1.5" transform="rotate(-20 328 724)"/><circle cx="328" cy="724" r="1.8" fill="#fff" fill-opacity="0.75"/><circle cx="346" cy="724" r="4.6" stroke="#fff" stroke-opacity="0.85" stroke-width="1.15" fill="none" stroke-dasharray="4.6 1.5" transform="rotate(-20 346 724)"/><circle cx="346" cy="724" r="1.8" fill="#fff" fill-opacity="0.75"/><circle cx="364" cy="724" r="4.6" stroke="#fff" stroke-opacity="0.85" stroke-width="1.15" fill="none" stroke-dasharray="4.6 1.5" transform="rotate(-20 364 724)"/><circle cx="364" cy="724" r="1.8" fill="#fff" fill-opacity="0.75"/><path d="M378.3 723.5 L380.7 726.3 L385.8 721.2" stroke="#fff" stroke-width="1.1" fill="none" stroke-linecap="round" stroke-linejoin="round"/><circle cx="400" cy="724" r="4.6" stroke="#fff" stroke-opacity="0.85" stroke-width="1.15" fill="none" stroke-dasharray="4.6 1.5" transform="rotate(-20 400 724)"/><circle cx="400" cy="724" r="1.8" fill="#fff" fill-opacity="0.75"/><path d="M414.3 723.5 L416.7 726.3 L421.8 721.2" stroke="#fff" stroke-width="1.1" fill="none" stroke-linecap="round" stroke-linejoin="round"/><path d="M432.3 723.5 L434.7 726.3 L439.8 721.2" stroke="#fff" stroke-width="1.1" fill="none" stroke-linecap="round" stroke-linejoin="round"/><path d="M450.3 723.5 L452.7 726.3 L457.8 721.2" stroke="#fff" stroke-width="1.1" fill="none" stroke-linecap="round" stroke-linejoin="round"/><circle cx="292" cy="744" r="4.6" stroke="#fff" stroke-opacity="0.85" stroke-width="1.15" fill="none" stroke-dasharray="4.6 1.5" transform="rotate(-20 292 744)"/><circle cx="292" cy="744" r="1.8" fill="#fff" fill-opacity="0.75"/><path d="M306.3 743.5 L308.7 746.3 L313.8 741.2" stroke="#fff" stroke-width="1.1" fill="none" stroke-linecap="round" stroke-linejoin="round"/><circle cx="328" cy="744" r="4.6" stroke="#fff" stroke-opacity="0.85" stroke-width="1.15" fill="none" stroke-dasharray="4.6 1.5" transform="rotate(-20 328 744)"/><circle cx="328" cy="744" r="1.8" fill="#fff" fill-opacity="0.75"/><circle cx="346" cy="744" r="4.6" stroke="#fff" stroke-opacity="0.85" stroke-width="1.15" fill="none" stroke-dasharray="4.6 1.5" transform="rotate(-20 346 744)"/><circle cx="346" cy="744" r="1.8" fill="#fff" fill-opacity="0.75"/><circle cx="364" cy="744" r="4.6" stroke="#fff" stroke-opacity="0.85" stroke-width="1.15" fill="none" stroke-dasharray="4.6 1.5" transform="rotate(-20 364 744)"/><circle cx="364" cy="744" r="1.8" fill="#fff" fill-opacity="0.75"/><path d="M378.3 743.5 L380.7 746.3 L385.8 741.2" stroke="#fff" stroke-width="1.1" fill="none" stroke-linecap="round" stroke-linejoin="round"/><circle cx="400" cy="744" r="4.6" stroke="#fff" stroke-opacity="0.85" stroke-width="1.15" fill="none" stroke-dasharray="4.6 1.5" transform="rotate(-20 400 744)"/><circle cx="400" cy="744" r="1.8" fill="#fff" fill-opacity="0.75"/><path d="M414.3 743.5 L416.7 746.3 L421.8 741.2" stroke="#fff" stroke-width="1.1" fill="none" stroke-linecap="round" stroke-linejoin="round"/><path d="M432.3 743.5 L434.7 746.3 L439.8 741.2" stroke="#fff" stroke-width="1.1" fill="none" stroke-linecap="round" stroke-linejoin="round"/><path d="M450.3 743.5 L452.7 746.3 L457.8 741.2" stroke="#fff" stroke-width="1.1" fill="none" stroke-linecap="round" stroke-linejoin="round"/><circle cx="292" cy="764" r="4.6" stroke="#fff" stroke-opacity="0.85" stroke-width="1.15" fill="none" stroke-dasharray="4.6 1.5" transform="rotate(-20 292 764)"/><circle cx="292" cy="764" r="1.8" fill="#fff" fill-opacity="0.75"/><path d="M306.3 763.5 L308.7 766.3 L313.8 761.2" stroke="#fff" stroke-width="1.1" fill="none" stroke-linecap="round" stroke-linejoin="round"/><circle cx="328" cy="764" r="4.6" stroke="#fff" stroke-opacity="0.85" stroke-width="1.15" fill="none" stroke-dasharray="4.6 1.5" transform="rotate(-20 328 764)"/><circle cx="328" cy="764" r="1.8" fill="#fff" fill-opacity="0.75"/><circle cx="346" cy="764" r="4.6" stroke="#fff" stroke-opacity="0.85" stroke-width="1.15" fill="none" stroke-dasharray="4.6 1.5" transform="rotate(-20 346 764)"/><circle cx="346" cy="764" r="1.8" fill="#fff" fill-opacity="0.75"/><circle cx="364" cy="764" r="4.6" stroke="#fff" stroke-opacity="0.85" stroke-width="1.15" fill="none" stroke-dasharray="4.6 1.5" transform="rotate(-20 364 764)"/><circle cx="364" cy="764" r="1.8" fill="#fff" fill-opacity="0.75"/><path d="M378.3 763.5 L380.7 766.3 L385.8 761.2" stroke="#fff" stroke-width="1.1" fill="none" stroke-linecap="round" stroke-linejoin="round"/><circle cx="400" cy="764" r="4.6" stroke="#fff" stroke-opacity="0.85" stroke-width="1.15" fill="none" stroke-dasharray="4.6 1.5" transform="rotate(-20 400 764)"/><circle cx="400" cy="764" r="1.8" fill="#fff" fill-opacity="0.75"/><path d="M414.3 763.5 L416.7 766.3 L421.8 761.2" stroke="#fff" stroke-width="1.1" fill="none" stroke-linecap="round" stroke-linejoin="round"/><path d="M432.3 763.5 L434.7 766.3 L439.8 761.2" stroke="#fff" stroke-width="1.1" fill="none" stroke-linecap="round" stroke-linejoin="round"/><path d="M450.3 763.5 L452.7 766.3 L457.8 761.2" stroke="#fff" stroke-width="1.1" fill="none" stroke-linecap="round" stroke-linejoin="round"/></svg>
<div class="a" style="left:1595px;top:15px;width:200px;height:40px;background:#f2f2f2;border-radius:6px"></div>
<svg style="left:0;top:0" width="1" height="1" fill="none" stroke="#18181b" stroke-width="1.9" stroke-linecap="round"><circle cx="1620" cy="33.3" r="4.9"/><path d="M1623.8 37.1 L1628 41.3"/></svg>
<div class="t" style="left:1640.00px;top:28.35px;font-size:14px;color:#18181b;letter-spacing:0.136px">Search Dags</div>
<div class="a" style="left:1731px;top:26px;width:31px;height:17px;background:#f4f4f5;border:1px solid #dedee2;border-radius:4px"></div>
<div class="t" style="left:1735.50px;top:29.61px;font-size:10.5px;color:#27272a;">&#8984;+K</div>
<div class="a" style="left:1799px;top:15px;width:109px;height:40px;background:#3d58e0;border-radius:6px"></div>
<svg style="left:0;top:0" width="1" height="1" fill="none" stroke="#fff" stroke-width="1.7" stroke-linejoin="round"><path d="M1820 28 L1831.8 35.1 L1820 42.2 Z"/></svg>
<div class="t" style="left:1844.00px;top:27.93px;font-size:14.5px;color:#fff;letter-spacing:0.202px">Trigger</div>
<div class="a" style="left:481px;top:63px;width:1427px;height:132px;background:#fff;border:1px solid #e4e4e7;border-radius:8px"></div>
<svg style="left:0;top:0" width="1" height="1" fill="none" stroke="#18181b" stroke-width="1.9" stroke-linecap="butt"><path d="M495.1 94.2 V99.5 M500.2 89.5 V99.5 M505.1 84.3 V99.5"/></svg>
<div class="t" style="left:518.70px;top:82.76px;font-size:18px;font-weight:700;-webkit-text-stroke:0;color:#09090b;letter-spacing:0.219px">2025-04-21, 13:11:17</div>
<div class="a" style="left:713px;top:80px;width:88px;height:24px;background:#2b7219;border-radius:12px"></div>
<svg style="left:0;top:0" width="1" height="1" fill="none" stroke="#fff" stroke-width="1.3" stroke-linecap="round" stroke-linejoin="round"><path d="M723 91.7 L726.3 95 L733.2 88.3"/></svg>
<div class="t" style="left:739.40px;top:85.05px;font-size:14px;color:#fff;letter-spacing:0.320px">success</div>
<div class="a" style="left:1476px;top:72px;width:133px;height:40px;background:#fff;border:1px solid #e4e4e7;border-radius:6px"></div>
<div class="a" style="left:1613px;top:72px;width:126px;height:40px;background:#fff;border:1px solid #e4e4e7;border-radius:6px"></div>
<div class="a" style="left:1743px;top:72px;width:156px;height:40px;background:#fff;border:1px solid #e4e4e7;border-radius:6px"></div>
<div class="t" style="left:1521.20px;top:85.05px;font-size:14px;color:#18181b;letter-spacing:0.263px">Add a note</div>
<div class="t" style="left:1658.00px;top:85.05px;font-size:14px;color:#18181b;letter-spacing:0.071px">Clear Run</div>
<div class="t" style="left:1760.50px;top:85.05px;font-size:14px;color:#18181b;letter-spacing:0.159px">Mark Run as...</div>
<svg style="left:0;top:0" width="1" height="1" fill="none" stroke="#18181b" stroke-width="1.6" stroke-linecap="round" stroke-linejoin="round">
<path d="M1495.5 86.3 a1.6 1.6 0 0 1 1.6 -1.6 H1509 a1.6 1.6 0 0 1 1.6 1.6 V94.6 a1.6 1.6 0 0 1 -1.6 1.6 H1499.5 L1495.5 99.5 Z"/>
<path d="M1644.3 88.6 A5.2 5.2 0 1 0 1644.9 95.2"/><path d="M1644.6 85.6 V88.9 H1641.3"/>
</svg>
<svg style="left:0;top:0" width="1" height="1"><path d="M1867 89.2 L1876.4 89.2 L1871.7 94 Z" fill="#18181b"/></svg>
<div class="t" style="left:490.40px;top:129.24px;font-size:12px;font-weight:700;-webkit-text-stroke:0;color:#52525b;">Logical Date</div>
<div class="t" style="left:490.40px;top:158.66px;font-size:16px;color:#09090b;letter-spacing:0.020px">2025-04-21, 13:11:17</div>
<div class="t" style="left:789.00px;top:129.24px;font-size:12px;font-weight:700;-webkit-text-stroke:0;color:#52525b;">Run Type</div>
<div class="t" style="left:1012.00px;top:129.24px;font-size:12px;font-weight:700;-webkit-text-stroke:0;color:#52525b;">Start</div>
<div class="t" style="left:1012.00px;top:158.66px;font-size:16px;color:#09090b;letter-spacing:0.020px">2025-04-21, 13:11:19</div>
<div class="t" style="left:1313.00px;top:129.24px;font-size:12px;font-weight:700;-webkit-text-stroke:0;color:#52525b;">End</div>
<div class="t" style="left:1313.00px;top:158.66px;font-size:16px;color:#09090b;letter-spacing:0.020px">2025-04-21, 13:11:27</div>
<div class="t" style="left:1614.30px;top:129.24px;font-size:12px;font-weight:700;-webkit-text-stroke:0;color:#52525b;">Duration</div>
<div class="t" style="left:1614.30px;top:158.66px;font-size:16px;color:#09090b;letter-spacing:0.315px">8.20s</div>
<div class="t" style="left:1811.60px;top:129.24px;font-size:12px;font-weight:700;-webkit-text-stroke:0;color:#52525b;letter-spacing:0.182px">Dag Version(s)</div>
<svg style="left:0;top:0" width="1" height="1"><path d="M794 160.7 L801.5 166 L794 171.3 Z" fill="#09090b"/></svg>
<div class="t" style="left:814.00px;top:158.66px;font-size:16px;color:#09090b;letter-spacing:-0.217px">manual</div>
<div class="t" style="left:1811.60px;top:158.75px;font-size:14px;color:#09090b;">v1</div>
<div class="a" style="left:473px;top:239px;width:1435px;height:1px;background:#e4e4e7;"></div>
<div class="t" style="left:489.50px;top:212.76px;font-size:16px;font-weight:700;-webkit-text-stroke:0;color:#52525b;letter-spacing:0.073px">Task Instances</div>
<div class="t" style="left:637.00px;top:212.76px;font-size:16px;font-weight:700;-webkit-text-stroke:0;color:#52525b;letter-spacing:-0.294px">Events</div>
<div class="t" style="left:720.70px;top:212.76px;font-size:16px;font-weight:700;-webkit-text-stroke:0;color:#52525b;">Code</div>
<div class="t" style="left:793.60px;top:212.76px;font-size:16px;font-weight:700;-webkit-text-stroke:0;color:#09090b;letter-spacing:0.122px">Details</div>
<div class="a" style="left:777px;top:238px;width:86px;height:3px;background:#3d5ae0;"></div>
<div class="a" style="left:489px;top:256px;width:1403px;height:46px;background:#f2f2f2;"></div>
<div class="a" style="left:489px;top:302px;width:1403px;height:57px;background:#fff;"></div>
<div class="a" style="left:489px;top:359px;width:1403px;height:45px;background:#f2f2f2;"></div>
<div class="a" style="left:489px;top:404px;width:1403px;height:45px;background:#fff;"></div>
<div class="a" style="left:489px;top:449px;width:1403px;height:45px;background:#f2f2f2;"></div>
<div class="a" style="left:489px;top:494px;width:1403px;height:45px;background:#fff;"></div>
<div class="a" style="left:489px;top:539px;width:1403px;height:45px;background:#f2f2f2;"></div>
<div class="a" style="left:489px;top:584px;width:1403px;height:45px;background:#fff;"></div>
<div class="a" style="left:489px;top:629px;width:1403px;height:45px;background:#f2f2f2;"></div>
<div class="a" style="left:489px;top:674px;width:1403px;height:45px;background:#fff;"></div>
<div class="a" style="left:489px;top:719px;width:1403px;height:45px;background:#f2f2f2;"></div>
<div class="a" style="left:489px;top:764px;width:1403px;height:160px;background:#fff;"></div>
<div class="a" style="left:489px;top:924px;width:1403px;height:57px;background:#f2f2f2;"></div>
<div class="a" style="left:489px;top:302px;width:1403px;height:1px;background:#e4e4e7;"></div>
<div class="t" style="left:501.50px;top:272.45px;font-size:14px;color:#18181b;">State</div>
<div class="a" style="left:489px;top:359px;width:1403px;height:1px;background:#e4e4e7;"></div>
<div class="t" style="left:501.50px;top:323.95px;font-size:14px;color:#18181b;">Run ID</div>
<div class="a" style="left:489px;top:404px;width:1403px;height:1px;background:#e4e4e7;"></div>
<div class="t" style="left:501.50px;top:374.95px;font-size:14px;color:#18181b;">Run Type</div>
<div class="a" style="left:489px;top:449px;width:1403px;height:1px;background:#e4e4e7;"></div>
<div class="t" style="left:501.50px;top:419.95px;font-size:14px;color:#18181b;">Run Duration</div>
<div class="a" style="left:489px;top:494px;width:1403px;height:1px;background:#e4e4e7;"></div>
<div class="t" style="left:501.50px;top:464.95px;font-size:14px;color:#18181b;letter-spacing:0.195px">Last Scheduling Decision</div>
<div class="a" style="left:489px;top:539px;width:1403px;height:1px;background:#e4e4e7;"></div>
<div class="t" style="left:501.50px;top:509.95px;font-size:14px;color:#18181b;">Queued at</div>
<div class="a" style="left:489px;top:584px;width:1403px;height:1px;background:#e4e4e7;"></div>
<div class="t" style="left:501.50px;top:554.95px;font-size:14px;color:#18181b;">Start Date</div>
<div class="a" style="left:489px;top:629px;width:1403px;height:1px;background:#e4e4e7;"></div>
<div class="t" style="left:501.50px;top:599.95px;font-size:14px;color:#18181b;">End Date</div>
<div class="a" style="left:489px;top:674px;width:1403px;height:1px;background:#e4e4e7;"></div>
<div class="t" style="left:501.50px;top:644.95px;font-size:14px;color:#18181b;">Data Interval Start</div>
<div class="a" style="left:489px;top:719px;width:1403px;height:1px;background:#e4e4e7;"></div>
<div class="t" style="left:501.50px;top:689.95px;font-size:14px;color:#18181b;">Data Interval End</div>
<div class="a" style="left:489px;top:764px;width:1403px;height:1px;background:#e4e4e7;"></div>
<div class="t" style="left:501.50px;top:734.95px;font-size:14px;color:#18181b;">Trigger Source</div>
<div class="a" style="left:489px;top:924px;width:1403px;height:1px;background:#e4e4e7;"></div>
<div class="t" style="left:501.50px;top:837.45px;font-size:14px;color:#18181b;">Dag Version(s)</div>
<div class="a" style="left:489px;top:981px;width:1403px;height:1px;background:#e4e4e7;"></div>
<div class="t" style="left:501.50px;top:945.95px;font-size:14px;color:#18181b;">Run Config</div>
<div class="t" style="left:909.60px;top:419.95px;font-size:14px;color:#18181b;letter-spacing:0.412px">8.20s</div>
<div class="t" style="left:909.60px;top:464.95px;font-size:14px;color:#18181b;letter-spacing:0.828px">2025-04-21, 13:11:27</div>
<div class="t" style="left:909.60px;top:509.95px;font-size:14px;color:#18181b;letter-spacing:0.828px">2025-04-21, 13:11:18</div>
<div class="t" style="left:909.60px;top:554.95px;font-size:14px;color:#18181b;letter-spacing:0.828px">2025-04-21, 13:11:19</div>
<div class="t" style="left:909.60px;top:599.95px;font-size:14px;color:#18181b;letter-spacing:0.828px">2025-04-21, 13:11:27</div>
<div class="t" style="left:909.60px;top:644.95px;font-size:14px;color:#18181b;letter-spacing:0.828px">2025-04-21, 13:11:17</div>
<div class="t" style="left:909.60px;top:689.95px;font-size:14px;color:#18181b;letter-spacing:0.828px">2025-04-21, 13:11:17</div>
<div class="t" style="left:909.60px;top:734.95px;font-size:14px;color:#18181b;">rest_api</div>
<div class="a" style="left:909px;top:268px;width:22px;height:22px;background:#2b7219;border-radius:11px"></div>
<svg style="left:0;top:0" width="1" height="1" fill="none" stroke="#fff" stroke-width="1.25" stroke-linecap="round" stroke-linejoin="round"><path d="M915.2 279.1 L918.7 282.3 L924.8 275.6"/></svg>
<div class="t" style="left:935.60px;top:271.45px;font-size:14px;color:#18181b;letter-spacing:0.137px">success</div>
<div class="t" style="left:909.50px;top:323.95px;font-size:14px;color:#18181b;letter-spacing:0.703px">manual__2025-04-21T17:11:18.116174+00:00</div>
<div class="a" style="left:1234px;top:315px;width:32px;height:32px;background:#f2f2f2;border-radius:6px"></div>
<svg style="left:0;top:0" width="1" height="1" fill="none" stroke="#18181b" stroke-width="1.5" stroke-linejoin="round"><rect x="1244.5" y="326" width="11" height="12" rx="1.2"/><rect x="1247.3" y="324.3" width="5.4" height="3" rx="0.8" fill="#f2f2f2"/></svg>
<svg style="left:0;top:0" width="1" height="1"><path d="M913 377.8 L920 382.2 L913 386.6 Z" fill="#18181b"/></svg>
<div class="t" style="left:931.60px;top:375.45px;font-size:14px;color:#18181b;letter-spacing:0.1px;">manual</div>
<div class="a" style="left:909px;top:777px;width:971px;height:44px;background:#f2f2f2;"></div>
<div class="a" style="left:909px;top:821px;width:971px;height:45px;background:#fff;"></div>
<div class="a" style="left:909px;top:866px;width:971px;height:45px;background:#f2f2f2;"></div>
<div class="a" style="left:909px;top:821px;width:971px;height:1px;background:#e4e4e7;"></div>
<div class="t" style="left:921.40px;top:792.45px;font-size:14px;color:#18181b;letter-spacing:0.05px;">Version ID</div>
<div class="t" style="left:1170.30px;top:792.45px;font-size:14px;color:#18181b;letter-spacing:0.899px">0196594d-4412-7142-8109-3fa5abb24078</div>
<div class="a" style="left:909px;top:866px;width:971px;height:1px;background:#e4e4e7;"></div>
<div class="t" style="left:921.40px;top:836.95px;font-size:14px;color:#18181b;letter-spacing:0.05px;">Bundle Name</div>
<div class="t" style="left:1170.30px;top:836.95px;font-size:14px;color:#18181b;letter-spacing:0.425px">dags-folder</div>
<div class="a" style="left:909px;top:911px;width:971px;height:1px;background:#e4e4e7;"></div>
<div class="t" style="left:921.40px;top:881.95px;font-size:14px;color:#18181b;letter-spacing:0.05px;">Created At</div>
<div class="t" style="left:1170.30px;top:881.95px;font-size:14px;color:#18181b;letter-spacing:0.779px">2025-04-21, 13:02:38</div>
<svg style="left:0;top:0" width="1" height="1"><path d="M911 940.8 L916 945.5 L911 950.2 Z" fill="#3a9c94"/></svg>
<div class="t" style="left:926.50px;top:940.65px;font-size:14px;font-weight:700;-webkit-text-stroke:0;color:#0f2a3a;font-family:'Liberation Mono',monospace;">{}</div>
<div class="t" style="left:952.50px;top:940.65px;font-size:14px;color:#a8a8a8;font-family:'Liberation Mono',monospace;font-style:italic;">0 items</div>
<svg style="left:0;top:0" width="1" height="1" fill="none" stroke="#18181b" stroke-width="1.5" stroke-linejoin="round"><rect x="1028.5" y="947.6" width="11" height="12.2" rx="1.2"/><rect x="1031.2" y="945.9" width="5.4" height="3" rx="0.8" fill="#f2f2f2"/></svg>
<div class="a" style="left:0px;top:1208px;width:490px;height:36px;background:linear-gradient(rgba(0,0,0,0),rgba(0,0,0,0.012) 40%,rgba(0,0,0,0.06));-webkit-mask-image:linear-gradient(to right,#000 0%,#000 75%,transparent 100%)"></div>
</div></body></html>
